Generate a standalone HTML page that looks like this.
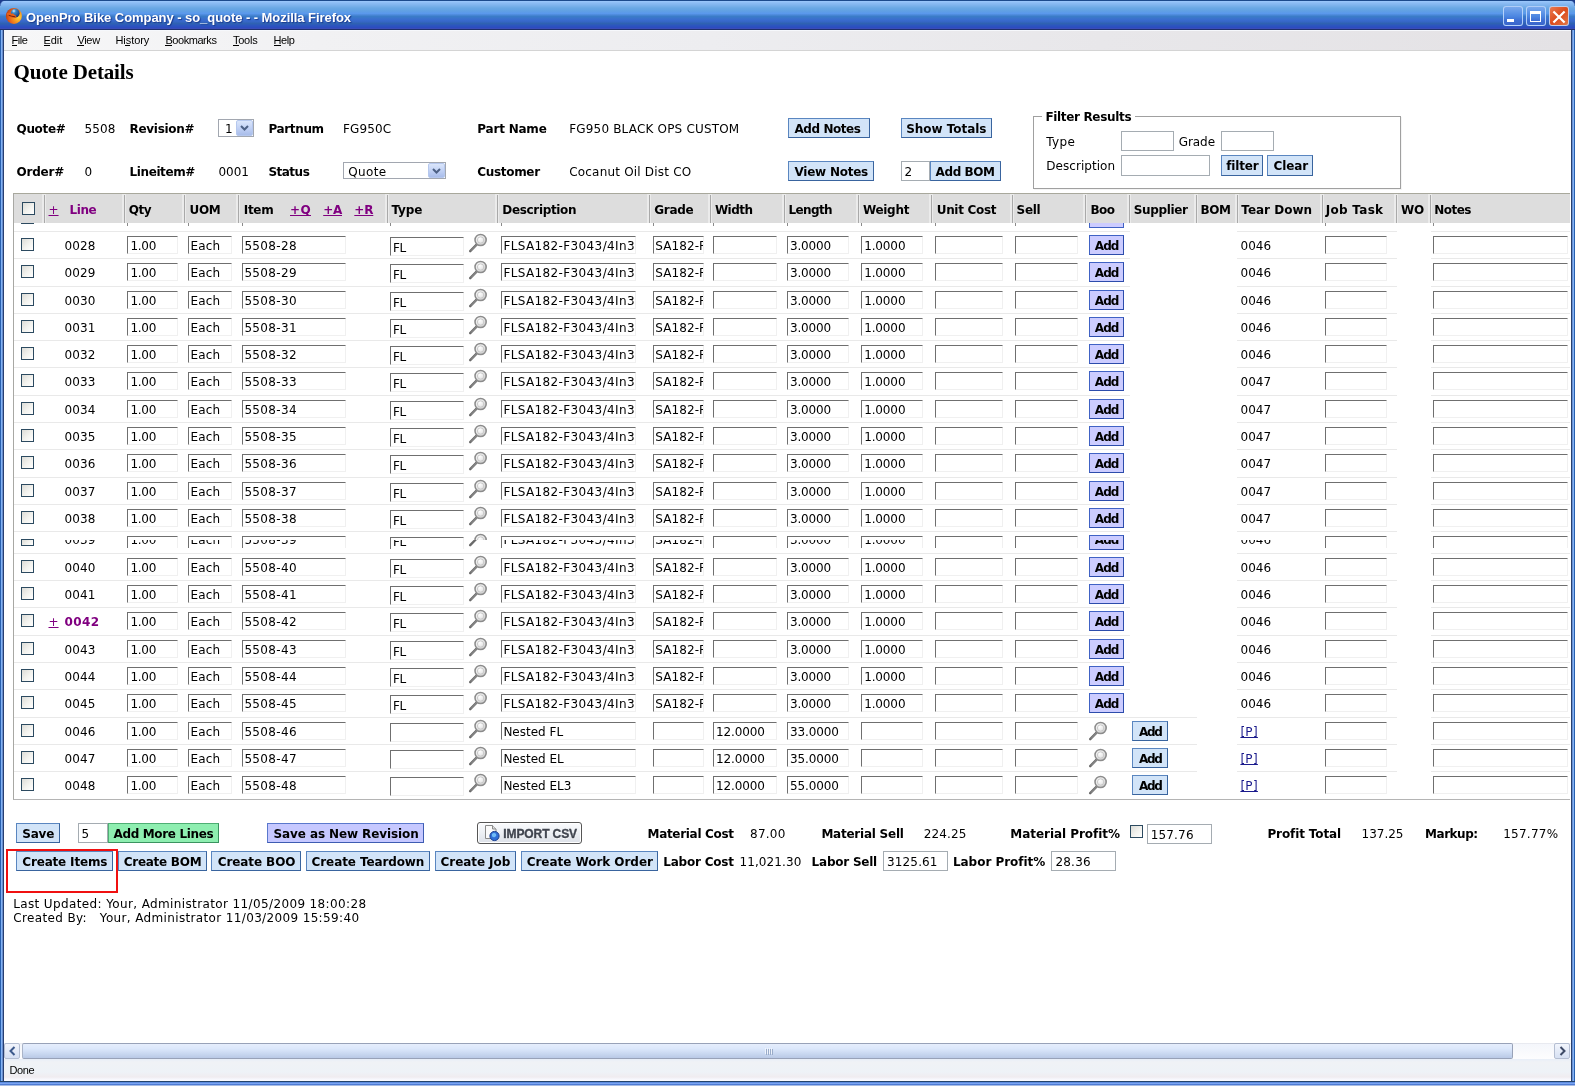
<!DOCTYPE html>
<html><head><meta charset="utf-8"><title>OpenPro Bike Company - so_quote</title>
<style>
html,body{margin:0;padding:0;background:#fff;}
body{width:1575px;height:1086px;position:relative;overflow:hidden;font-family:'DejaVu Sans','Liberation Sans',sans-serif;font-size:12px;color:#000;}
div{position:absolute;}
.t{position:absolute;white-space:pre;display:block;}
</style></head>
<body>
<div id="w" style="left:0;top:0;width:1575px;height:1086px;will-change:transform;overflow:hidden;">
<div style="left:0px;top:0px;width:1575px;height:30px;background:linear-gradient(#1c4a8c 0,#1c4a8c 1px,#9cc8fc 1px,#8cbcf4 3px,#80b4ee 5px,#6aa8e4 8px,#60a0e4 11px,#5a98ec 13.5px,#4a88d8 15px,#3a7cc8 16.5px,#3a70ce 19px,#3868cc 21px,#2f62b2 23.5px,#2c56be 25.5px,#2c4cc0 27.5px,#3a4cb8 28.5px,#20306c 29px,#20306c 30px);"></div>
<div style="left:0px;top:30px;width:4px;height:1056px;z-index:5;background:linear-gradient(90deg,#2860b0 0,#2860b0 1px,#82b2f5 1px,#82b2f5 2px,#6a8ecc 2px,#6a8ecc 3px,#283f72 3px,#283f72 4px);"></div>
<div style="left:1571px;top:30px;width:4px;height:1056px;z-index:5;background:linear-gradient(90deg,#28406e 0,#28406e 1px,#6a90d0 1px,#6a90d0 2px,#82b2f5 2px,#82b2f5 3px,#2860b0 3px,#2860b0 4px);"></div>
<div style="left:0px;top:1081px;width:1575px;height:5px;z-index:6;background:linear-gradient(#24446c 0,#24446c 1px,#5080d8 1px,#7aa4f0 2.5px,#3a68c8 4px,#3a68c8 4px,#a8bce4 4px,#a8bce4 5px);"></div>
<svg style="position:absolute;left:5px;top:7px" width="18" height="18" viewBox="0 0 18 18">
<defs><radialGradient id="fg" cx="80%" cy="60%" r="85%"><stop offset="0" stop-color="#ffd23a"/><stop offset=".35" stop-color="#f79a1e"/><stop offset=".7" stop-color="#e8601a"/><stop offset="1" stop-color="#b43a10"/></radialGradient>
<radialGradient id="gb" cx="35%" cy="25%" r="75%"><stop offset="0" stop-color="#d8f0ff"/><stop offset=".3" stop-color="#3a8ac8"/><stop offset="1" stop-color="#1a3a78"/></radialGradient></defs>
<circle cx="8.9" cy="8.9" r="8" fill="url(#fg)"/>
<circle cx="10.2" cy="6.2" r="4.4" fill="url(#gb)"/>
<path d="M1.6 6.4 C3.2 5.2 5 5.6 6.2 6.8 C7.6 6.2 9 6.8 9.6 8 C10.8 8.4 11.6 9.2 11.2 10.2 C9.4 11.4 6.6 11 4.8 9.8 C3.6 9.4 2.2 8.4 1.6 6.4Z" fill="#e8621a"/>
<path d="M3.6 8.3 C5.6 9 8 9.6 10.4 9.8" stroke="#7a2408" stroke-width="1" fill="none"/>
</svg>
<span class="t" style="left:26px;top:10.00px;font-size:13px;line-height:15px;font-family:'Liberation Sans',sans-serif;font-weight:bold;color:#fff;text-shadow:1px 1px 1px #1a3a8c;letter-spacing:-0.058px;">OpenPro Bike Company - so_quote - - Mozilla Firefox</span>
<div style="left:1503px;top:6px;width:20px;height:20px;border-radius:3px;border:1px solid rgba(190,216,252,.9);box-sizing:border-box;background:linear-gradient(#7aa8ec,#5a92e6 35%,#4a84e0 55%,#3e6ed2 75%,#3a66cc);"><div style="left:3px;top:12px;width:7px;height:3px;background:#fff"></div></div>
<div style="left:1526px;top:6px;width:20px;height:20px;border-radius:3px;border:1px solid rgba(190,216,252,.9);box-sizing:border-box;background:linear-gradient(#7aa8ec,#5a92e6 35%,#4a84e0 55%,#3e6ed2 75%,#3a66cc);"><div style="left:3px;top:4px;width:11px;height:11px;box-sizing:border-box;border:1px solid #fff;border-top-width:3px"></div></div>
<div style="left:1549px;top:6px;width:20px;height:20px;border-radius:3px;border:1px solid rgba(190,216,252,.9);box-sizing:border-box;background:linear-gradient(135deg,#ea7a52,#dc4c1c 50%,#e07848);"><svg style="position:absolute;left:2px;top:3px" width="14" height="14" viewBox="0 0 14 14"><path d="M2.2 2.2 L11.8 11.8 M11.8 2.2 L2.2 11.8" stroke="#fff" stroke-width="2.2" stroke-linecap="square"/></svg></div>
<div style="left:0px;top:0px;width:6px;height:6px;background:radial-gradient(circle at 100% 100%,transparent 5px,#1c3c8c 6.5px);"></div>
<div style="left:1569px;top:0px;width:6px;height:6px;background:radial-gradient(circle at 0 100%,transparent 5px,#1c3c8c 6.5px);"></div>
<div style="left:4px;top:30px;width:1567px;height:21px;background:linear-gradient(90deg,#f7f7f8 0,#f1f1f3 20%,#ededf0 45%,#e8e7ea 70%,#e4e2e5 100%);border-top:1px solid #f6f8fc;border-bottom:1px solid #d4d4d4;box-sizing:border-box;"></div>
<span class="t" style="left:11.6px;top:34.00px;font-size:11px;line-height:12px;font-family:'Liberation Sans',sans-serif;color:#000;letter-spacing:-0.509px;">File</span>
<span class="t" style="left:43.6px;top:34.00px;font-size:11px;line-height:12px;font-family:'Liberation Sans',sans-serif;color:#000;letter-spacing:-0.092px;">Edit</span>
<span class="t" style="left:77.4px;top:34.00px;font-size:11px;line-height:12px;font-family:'Liberation Sans',sans-serif;color:#000;letter-spacing:-0.314px;">View</span>
<span class="t" style="left:115.4px;top:34.00px;font-size:11px;line-height:12px;font-family:'Liberation Sans',sans-serif;color:#000;letter-spacing:-0.048px;">History</span>
<span class="t" style="left:165.4px;top:34.00px;font-size:11px;line-height:12px;font-family:'Liberation Sans',sans-serif;color:#000;letter-spacing:-0.437px;">Bookmarks</span>
<span class="t" style="left:232.9px;top:34.00px;font-size:11px;line-height:12px;font-family:'Liberation Sans',sans-serif;color:#000;letter-spacing:-0.218px;">Tools</span>
<span class="t" style="left:273.5px;top:34.00px;font-size:11px;line-height:12px;font-family:'Liberation Sans',sans-serif;color:#000;letter-spacing:-0.381px;">Help</span>
<div style="left:11.6px;top:45px;width:5.5px;height:1px;background:#000;"></div>
<div style="left:43.6px;top:45px;width:6px;height:1px;background:#000;"></div>
<div style="left:77.4px;top:45px;width:6.5px;height:1px;background:#000;"></div>
<div style="left:125.3px;top:45px;width:4.8px;height:1px;background:#000;"></div>
<div style="left:165.4px;top:45px;width:6.5px;height:1px;background:#000;"></div>
<div style="left:232.9px;top:45px;width:6px;height:1px;background:#000;"></div>
<div style="left:273.5px;top:45px;width:7px;height:1px;background:#000;"></div>
<div style="left:4px;top:1059px;width:1567px;height:22px;background:linear-gradient(#e8eef8 0,#f0f2f6 3px,#eef2f7 13px,#f0ecf0 18px,#f6f6fc 20px,#fcfcff 22px);"></div>
<span class="t" style="left:9.5px;top:1064.00px;font-size:11px;line-height:12px;font-family:'Liberation Sans',sans-serif;letter-spacing:-0.374px;">Done</span>
<div style="left:4px;top:1043px;width:1567px;height:16px;background:linear-gradient(#f4f6fb,#fdfdfe);border-top:1px solid #e8eaf0;box-sizing:border-box;"></div>
<div style="left:4px;top:1043px;width:16px;height:16px;background:linear-gradient(#f2f5fc,#d6e0f3);border:1px solid #b4bed2;box-sizing:border-box;border-radius:2px;"><svg style="position:absolute;left:3px;top:2px" width="9" height="10" viewBox="0 0 9 10"><path d="M6.5 1 L2.5 5 L6.5 9" stroke="#3d5a8c" stroke-width="2" fill="none"/></svg></div>
<div style="left:1554px;top:1043px;width:16px;height:16px;background:linear-gradient(#f2f5fc,#d6e0f3);border:1px solid #b4bed2;box-sizing:border-box;border-radius:2px;"><svg style="position:absolute;left:3px;top:2px" width="9" height="10" viewBox="0 0 9 10"><path d="M2.5 1 L6.5 5 L2.5 9" stroke="#3d4a66" stroke-width="2" fill="none"/></svg></div>
<div style="left:22px;top:1043px;width:1491px;height:16px;background:linear-gradient(#e6eefc 0,#dbe7fb 35%,#c6d5ee 75%,#b9c9e6 100%);border:1px solid #98a2b8;border-left-color:#aab4c8;box-sizing:border-box;border-radius:2px;"><div style="left:742px;top:4px;width:1px;height:6px;background:#eef3fc;box-shadow:2px 0 #eef3fc,4px 0 #eef3fc,6px 0 #eef3fc,1px 1px #9aacc9,3px 1px #9aacc9,5px 1px #9aacc9,7px 1px #9aacc9"></div></div>
<span class="t" style="left:13.5px;top:60.00px;font-size:21px;line-height:24px;font-family:'Liberation Serif',serif;font-weight:bold;letter-spacing:-0.147px;">Quote Details</span>
<span class="t" style="left:16.5px;top:122.00px;font-size:12px;line-height:14px;font-weight:bold;letter-spacing:-0.320px;">Quote#</span>
<span class="t" style="left:84.4px;top:122.00px;font-size:12px;line-height:14px;letter-spacing:0.113px;">5508</span>
<span class="t" style="left:129.5px;top:122.00px;font-size:12px;line-height:14px;font-weight:bold;letter-spacing:-0.291px;">Revision#</span>
<span class="t" style="left:268.4px;top:122.00px;font-size:12px;line-height:14px;font-weight:bold;letter-spacing:-0.347px;">Partnum</span>
<span class="t" style="left:343.1px;top:122.00px;font-size:12px;line-height:14px;letter-spacing:0.119px;">FG950C</span>
<span class="t" style="left:477.3px;top:122.00px;font-size:12px;line-height:14px;font-weight:bold;letter-spacing:-0.210px;">Part Name</span>
<span class="t" style="left:569.2px;top:122.00px;font-size:12px;line-height:14px;letter-spacing:0.182px;">FG950 BLACK OPS CUSTOM</span>
<span class="t" style="left:16.5px;top:165.00px;font-size:12px;line-height:14px;font-weight:bold;letter-spacing:-0.221px;">Order#</span>
<span class="t" style="left:84.4px;top:165.00px;font-size:12px;line-height:14px;">0</span>
<span class="t" style="left:129.5px;top:165.00px;font-size:12px;line-height:14px;font-weight:bold;letter-spacing:-0.389px;">Lineitem#</span>
<span class="t" style="left:218.4px;top:165.00px;font-size:12px;line-height:14px;letter-spacing:-0.012px;">0001</span>
<span class="t" style="left:268.4px;top:165.00px;font-size:12px;line-height:14px;font-weight:bold;letter-spacing:-0.501px;">Status</span>
<span class="t" style="left:477.3px;top:165.00px;font-size:12px;line-height:14px;font-weight:bold;letter-spacing:-0.318px;">Customer</span>
<span class="t" style="left:569.2px;top:165.00px;font-size:12px;line-height:14px;letter-spacing:0.195px;">Cocanut Oil Dist CO</span>
<div style="left:218px;top:119px;width:36px;height:18px;background:#fff;border:1px solid #a2a7b0;box-sizing:border-box;"></div>
<div style="left:236px;top:120px;width:17px;height:16px;background:linear-gradient(#dbe6fb,#c2d2f5 50%,#a9bdea);border:1px solid #b6c8ee;border-radius:2px;box-sizing:border-box;"><svg style="position:absolute;left:3px;top:4px" width="9" height="7" viewBox="0 0 9 7"><path d="M1 1 L4.5 4.5 L8 1" stroke="#4d6185" stroke-width="2" fill="none"/></svg></div>
<span class="t" style="left:225px;top:122.00px;font-size:12px;line-height:14px;">1</span>
<div style="left:343px;top:162px;width:103px;height:17px;background:#fff;border:1px solid #a2a7b0;box-sizing:border-box;"></div>
<div style="left:428px;top:163px;width:17px;height:15px;background:linear-gradient(#dbe6fb,#c2d2f5 50%,#a9bdea);border:1px solid #b6c8ee;border-radius:2px;box-sizing:border-box;"><svg style="position:absolute;left:3px;top:4px" width="9" height="7" viewBox="0 0 9 7"><path d="M1 1 L4.5 4.5 L8 1" stroke="#4d6185" stroke-width="2" fill="none"/></svg></div>
<span class="t" style="left:348.3px;top:165.00px;font-size:12px;line-height:14px;letter-spacing:0.343px;">Quote</span>
<div style="left:788px;top:118px;width:82px;height:20px;background:#d2e4f8;border:1px solid #5a86c0;border-right-color:#39649e;border-bottom-color:#39649e;box-sizing:border-box;"></div>
<span class="t" style="left:794.5px;top:122.00px;font-size:12px;line-height:14px;font-weight:bold;letter-spacing:-0.439px;">Add Notes</span>
<div style="left:901px;top:118px;width:91px;height:20px;background:#d2e4f8;border:1px solid #5a86c0;border-right-color:#39649e;border-bottom-color:#39649e;box-sizing:border-box;"></div>
<span class="t" style="left:906.2px;top:122.00px;font-size:12px;line-height:14px;font-weight:bold;letter-spacing:-0.030px;">Show Totals</span>
<div style="left:788px;top:161px;width:86px;height:20px;background:#d2e4f8;border:1px solid #5a86c0;border-right-color:#39649e;border-bottom-color:#39649e;box-sizing:border-box;"></div>
<span class="t" style="left:794.5px;top:165.00px;font-size:12px;line-height:14px;font-weight:bold;letter-spacing:-0.241px;">View Notes</span>
<div style="left:901px;top:161px;width:29px;height:20px;background:#fff;border:1px solid #a5acb2;box-sizing:border-box;"></div>
<span class="t" style="left:904.6px;top:165.00px;font-size:12px;line-height:14px;">2</span>
<div style="left:930px;top:161px;width:71px;height:20px;background:#d2e4f8;border:1px solid #5a86c0;border-right-color:#39649e;border-bottom-color:#39649e;box-sizing:border-box;"></div>
<span class="t" style="left:935.6px;top:165.00px;font-size:12px;line-height:14px;font-weight:bold;letter-spacing:-0.420px;">Add BOM</span>
<div style="left:1033px;top:115.5px;width:368px;height:73px;border:1px solid #a0a0a0;box-sizing:border-box;box-shadow:inset 1px 1px 0 #fff, 1px 1px 0 #f4f4f4;"></div>
<div style="left:1042px;top:108px;width:93px;height:16px;background:#fff;"></div>
<span class="t" style="left:1045.4px;top:110.00px;font-size:12px;line-height:14px;font-weight:bold;letter-spacing:-0.332px;">Filter Results</span>
<span class="t" style="left:1046.2px;top:135.00px;font-size:12px;line-height:14px;letter-spacing:0.409px;">Type</span>
<span class="t" style="left:1178.7px;top:135.00px;font-size:12px;line-height:14px;letter-spacing:-0.059px;">Grade</span>
<span class="t" style="left:1046.2px;top:159.00px;font-size:12px;line-height:14px;letter-spacing:0.060px;">Description</span>
<div style="left:1121px;top:131px;width:53px;height:20px;background:#fff;border:1px solid #a5acb2;box-sizing:border-box;"></div>
<div style="left:1221px;top:131px;width:53px;height:20px;background:#fff;border:1px solid #a5acb2;box-sizing:border-box;"></div>
<div style="left:1121px;top:155px;width:89px;height:21px;background:#fff;border:1px solid #a5acb2;box-sizing:border-box;"></div>
<div style="left:1221px;top:155px;width:42px;height:21px;background:#d2e4f8;border:1px solid #5a86c0;border-right-color:#39649e;border-bottom-color:#39649e;box-sizing:border-box;"></div>
<span class="t" style="left:1226.2px;top:159.00px;font-size:12px;line-height:14px;font-weight:bold;letter-spacing:-0.169px;">filter</span>
<div style="left:1267px;top:155px;width:46px;height:21px;background:#d2e4f8;border:1px solid #5a86c0;border-right-color:#39649e;border-bottom-color:#39649e;box-sizing:border-box;"></div>
<span class="t" style="left:1273.5px;top:159.00px;font-size:12px;line-height:14px;font-weight:bold;letter-spacing:-0.076px;">Clear</span>
<div style="left:13px;top:193px;width:1557px;height:607px;border:1px solid #a8a89c;border-right:none;border-left-color:#a8a8a4;border-bottom-color:#b4b4b4;box-sizing:border-box;"></div>
<div style="left:14px;top:194px;width:1556px;height:29px;background:#dddddd;"></div>
<div style="left:42px;top:194px;width:4px;height:29px;background:#ebebeb;"></div>
<div style="left:44px;top:195px;width:1px;height:28px;background:#a9a9a9;"></div>
<div style="left:122px;top:194px;width:4px;height:29px;background:#ebebeb;"></div>
<div style="left:124px;top:195px;width:1px;height:28px;background:#a9a9a9;"></div>
<div style="left:182px;top:194px;width:4px;height:29px;background:#ebebeb;"></div>
<div style="left:184px;top:195px;width:1px;height:28px;background:#a9a9a9;"></div>
<div style="left:236px;top:194px;width:4px;height:29px;background:#ebebeb;"></div>
<div style="left:238px;top:195px;width:1px;height:28px;background:#a9a9a9;"></div>
<div style="left:385px;top:194px;width:4px;height:29px;background:#ebebeb;"></div>
<div style="left:387px;top:195px;width:1px;height:28px;background:#a9a9a9;"></div>
<div style="left:495px;top:194px;width:4px;height:29px;background:#ebebeb;"></div>
<div style="left:497px;top:195px;width:1px;height:28px;background:#a9a9a9;"></div>
<div style="left:647px;top:194px;width:4px;height:29px;background:#ebebeb;"></div>
<div style="left:649px;top:195px;width:1px;height:28px;background:#a9a9a9;"></div>
<div style="left:708px;top:194px;width:4px;height:29px;background:#ebebeb;"></div>
<div style="left:710px;top:195px;width:1px;height:28px;background:#a9a9a9;"></div>
<div style="left:782px;top:194px;width:4px;height:29px;background:#ebebeb;"></div>
<div style="left:784px;top:195px;width:1px;height:28px;background:#a9a9a9;"></div>
<div style="left:856px;top:194px;width:4px;height:29px;background:#ebebeb;"></div>
<div style="left:858px;top:195px;width:1px;height:28px;background:#a9a9a9;"></div>
<div style="left:929px;top:194px;width:4px;height:29px;background:#ebebeb;"></div>
<div style="left:931px;top:195px;width:1px;height:28px;background:#a9a9a9;"></div>
<div style="left:1010px;top:194px;width:4px;height:29px;background:#ebebeb;"></div>
<div style="left:1012px;top:195px;width:1px;height:28px;background:#a9a9a9;"></div>
<div style="left:1083px;top:194px;width:4px;height:29px;background:#ebebeb;"></div>
<div style="left:1085px;top:195px;width:1px;height:28px;background:#a9a9a9;"></div>
<div style="left:1127px;top:194px;width:4px;height:29px;background:#ebebeb;"></div>
<div style="left:1129px;top:195px;width:1px;height:28px;background:#a9a9a9;"></div>
<div style="left:1194px;top:194px;width:4px;height:29px;background:#ebebeb;"></div>
<div style="left:1196px;top:195px;width:1px;height:28px;background:#a9a9a9;"></div>
<div style="left:1235px;top:194px;width:4px;height:29px;background:#ebebeb;"></div>
<div style="left:1237px;top:195px;width:1px;height:28px;background:#a9a9a9;"></div>
<div style="left:1320px;top:194px;width:4px;height:29px;background:#ebebeb;"></div>
<div style="left:1322px;top:195px;width:1px;height:28px;background:#a9a9a9;"></div>
<div style="left:1394px;top:194px;width:4px;height:29px;background:#ebebeb;"></div>
<div style="left:1396px;top:195px;width:1px;height:28px;background:#a9a9a9;"></div>
<div style="left:1428px;top:194px;width:4px;height:29px;background:#ebebeb;"></div>
<div style="left:1430px;top:195px;width:1px;height:28px;background:#a9a9a9;"></div>
<span class="t" style="left:48.5px;top:203.00px;font-size:12px;line-height:14px;color:#800080;text-decoration:underline;text-decoration-skip-ink:none;">+</span>
<span class="t" style="left:69.6px;top:203.00px;font-size:12px;line-height:14px;font-weight:bold;color:#800080;letter-spacing:-0.488px;">Line</span>
<span class="t" style="left:128.7px;top:203.00px;font-size:12px;line-height:14px;font-weight:bold;letter-spacing:-0.489px;">Qty</span>
<span class="t" style="left:189.5px;top:203.00px;font-size:12px;line-height:14px;font-weight:bold;letter-spacing:-0.330px;">UOM</span>
<span class="t" style="left:243.8px;top:203.00px;font-size:12px;line-height:14px;font-weight:bold;letter-spacing:-0.336px;">Item</span>
<span class="t" style="left:391.4px;top:203.00px;font-size:12px;line-height:14px;font-weight:bold;letter-spacing:-0.103px;">Type</span>
<span class="t" style="left:502.3px;top:203.00px;font-size:12px;line-height:14px;font-weight:bold;letter-spacing:-0.339px;">Description</span>
<span class="t" style="left:654.3px;top:203.00px;font-size:12px;line-height:14px;font-weight:bold;letter-spacing:-0.319px;">Grade</span>
<span class="t" style="left:714.9px;top:203.00px;font-size:12px;line-height:14px;font-weight:bold;letter-spacing:-0.544px;">Width</span>
<span class="t" style="left:788.6px;top:203.00px;font-size:12px;line-height:14px;font-weight:bold;letter-spacing:-0.634px;">Length</span>
<span class="t" style="left:862.9px;top:203.00px;font-size:12px;line-height:14px;font-weight:bold;letter-spacing:-0.290px;">Weight</span>
<span class="t" style="left:936.7px;top:203.00px;font-size:12px;line-height:14px;font-weight:bold;letter-spacing:-0.306px;">Unit Cost</span>
<span class="t" style="left:1016.6px;top:203.00px;font-size:12px;line-height:14px;font-weight:bold;letter-spacing:-0.304px;">Sell</span>
<span class="t" style="left:1090.5px;top:203.00px;font-size:12px;line-height:14px;font-weight:bold;letter-spacing:-0.614px;">Boo</span>
<span class="t" style="left:1133.7px;top:203.00px;font-size:12px;line-height:14px;font-weight:bold;letter-spacing:-0.345px;">Supplier</span>
<span class="t" style="left:1200.4px;top:203.00px;font-size:12px;line-height:14px;font-weight:bold;letter-spacing:-0.399px;">BOM</span>
<span class="t" style="left:1241.3px;top:203.00px;font-size:12px;line-height:14px;font-weight:bold;letter-spacing:-0.007px;">Tear Down</span>
<span class="t" style="left:1325.7px;top:203.00px;font-size:12px;line-height:14px;font-weight:bold;letter-spacing:0.295px;">Job Task</span>
<span class="t" style="left:1401px;top:203.00px;font-size:12px;line-height:14px;font-weight:bold;letter-spacing:-0.119px;">WO</span>
<span class="t" style="left:1434.3px;top:203.00px;font-size:12px;line-height:14px;font-weight:bold;letter-spacing:-0.522px;">Notes</span>
<span class="t" style="left:290px;top:203.00px;font-size:12px;line-height:14px;font-weight:bold;color:#800080;text-decoration:underline;text-decoration-skip-ink:none;letter-spacing:0.367px;">+Q</span>
<span class="t" style="left:323.2px;top:203.00px;font-size:12px;line-height:14px;font-weight:bold;color:#800080;text-decoration:underline;text-decoration-skip-ink:none;letter-spacing:-0.272px;">+A</span>
<span class="t" style="left:354.3px;top:203.00px;font-size:12px;line-height:14px;font-weight:bold;color:#800080;text-decoration:underline;text-decoration-skip-ink:none;letter-spacing:-0.148px;">+R</span>
<div style="left:22px;top:202px;width:13px;height:13px;background:linear-gradient(135deg,#dcdcd7,#f3f3ef 55%,#ffffff);border:1px solid #2c4a60;box-sizing:border-box;"></div>
<div style="left:14px;top:231px;width:1116px;height:1px;background:#e9e9e9;"></div>
<div style="left:1237px;top:231px;width:160px;height:1px;background:#e9e9e9;"></div>
<div style="left:1431px;top:231px;width:139px;height:1px;background:#e9e9e9;"></div>
<div style="left:21px;top:238px;width:13px;height:13px;background:linear-gradient(135deg,#dcdcd7,#f3f3ef 55%,#ffffff);border:1px solid #2c4a60;box-sizing:border-box;"></div>
<span class="t" style="left:64.5px;top:239.00px;font-size:12px;line-height:14px;letter-spacing:0.088px;">0028</span>
<div style="left:127px;top:236px;width:51px;height:18px;background:#fff;border:1px solid #f0f0f0;border-top-color:#6f6f6f;border-left-color:#6f6f6f;box-sizing:border-box;overflow:hidden;"></div>
<div style="left:188px;top:236px;width:44px;height:18px;background:#fff;border:1px solid #f0f0f0;border-top-color:#6f6f6f;border-left-color:#6f6f6f;box-sizing:border-box;overflow:hidden;"></div>
<div style="left:242px;top:236px;width:104px;height:18px;background:#fff;border:1px solid #f0f0f0;border-top-color:#6f6f6f;border-left-color:#6f6f6f;box-sizing:border-box;overflow:hidden;"></div>
<div style="left:501px;top:236px;width:135px;height:18px;background:#fff;border:1px solid #f0f0f0;border-top-color:#6f6f6f;border-left-color:#6f6f6f;box-sizing:border-box;overflow:hidden;"></div>
<div style="left:653px;top:236px;width:51px;height:18px;background:#fff;border:1px solid #f0f0f0;border-top-color:#6f6f6f;border-left-color:#6f6f6f;box-sizing:border-box;overflow:hidden;"></div>
<div style="left:713px;top:236px;width:64px;height:18px;background:#fff;border:1px solid #f0f0f0;border-top-color:#6f6f6f;border-left-color:#6f6f6f;box-sizing:border-box;overflow:hidden;"></div>
<div style="left:787px;top:236px;width:62px;height:18px;background:#fff;border:1px solid #f0f0f0;border-top-color:#6f6f6f;border-left-color:#6f6f6f;box-sizing:border-box;overflow:hidden;"></div>
<div style="left:861px;top:236px;width:62px;height:18px;background:#fff;border:1px solid #f0f0f0;border-top-color:#6f6f6f;border-left-color:#6f6f6f;box-sizing:border-box;overflow:hidden;"></div>
<div style="left:935px;top:236px;width:68px;height:18px;background:#fff;border:1px solid #f0f0f0;border-top-color:#6f6f6f;border-left-color:#6f6f6f;box-sizing:border-box;overflow:hidden;"></div>
<div style="left:1015px;top:236px;width:63px;height:18px;background:#fff;border:1px solid #f0f0f0;border-top-color:#6f6f6f;border-left-color:#6f6f6f;box-sizing:border-box;overflow:hidden;"></div>
<div style="left:1325px;top:236px;width:62px;height:18px;background:#fff;border:1px solid #f0f0f0;border-top-color:#6f6f6f;border-left-color:#6f6f6f;box-sizing:border-box;overflow:hidden;"></div>
<div style="left:1433px;top:236px;width:135px;height:18px;background:#fff;border:1px solid #f0f0f0;border-top-color:#6f6f6f;border-left-color:#6f6f6f;box-sizing:border-box;overflow:hidden;"></div>
<div style="left:390px;top:237px;width:74px;height:19px;background:#fff;border:1px solid #f0f0f0;border-top-color:#6f6f6f;border-left-color:#6f6f6f;box-sizing:border-box;overflow:hidden;"></div>
<span class="t" style="left:130.4px;top:239.00px;font-size:12px;line-height:14px;letter-spacing:-0.255px;">1.00</span>
<span class="t" style="left:190.6px;top:239.00px;font-size:12px;line-height:14px;letter-spacing:0.115px;">Each</span>
<span class="t" style="left:244.4px;top:239.00px;font-size:12px;line-height:14px;letter-spacing:0.337px;">5508-28</span>
<svg style="position:absolute;left:468px;top:233px" width="20" height="20" viewBox="0 0 20 20"><defs><radialGradient id="lg1" cx="40%" cy="35%" r="70%"><stop offset="0" stop-color="#fff"/><stop offset=".6" stop-color="#e6e6e6"/><stop offset="1" stop-color="#bdbdbd"/></radialGradient></defs><path d="M8.6 11.6 L2.2 18.2" stroke="#6a6a6a" stroke-width="2.4" stroke-linecap="round"/><path d="M9.2 11.2 L3 17.6" stroke="#9a9a9a" stroke-width="1"/><circle cx="12.6" cy="7" r="5.6" fill="url(#lg1)" stroke="#8c8c8c" stroke-width="1.5"/><circle cx="12.6" cy="7" r="3.2" fill="none" stroke="#c9c9c9" stroke-width="1"/></svg>
<span class="t" style="left:393px;top:241.00px;font-size:12px;line-height:14px;letter-spacing:-0.297px;">FL</span>
<span class="t" style="left:503.4px;top:239.00px;font-size:12px;line-height:14px;width:131.5px;overflow:hidden;letter-spacing:0.379px;">FLSA182-F3043/4In3</span>
<span class="t" style="left:655.2px;top:239.00px;font-size:12px;line-height:14px;width:47.6px;overflow:hidden;letter-spacing:0.1px;">SA182-F</span>
<span class="t" style="left:789.9px;top:239.00px;font-size:12px;line-height:14px;letter-spacing:-0.133px;">3.0000</span>
<span class="t" style="left:864.2px;top:239.00px;font-size:12px;line-height:14px;letter-spacing:-0.133px;">1.0000</span>
<div style="left:1089px;top:235px;width:35px;height:20px;background:#ccccff;border:1px solid #4062c4;border-right-color:#2c4cac;border-bottom-color:#2c4cac;box-sizing:border-box;"></div>
<span class="t" style="left:1094.8px;top:239.00px;font-size:12px;line-height:14px;font-weight:bold;letter-spacing:-0.956px;">Add</span>
<span class="t" style="left:1240.6px;top:239.00px;font-size:12px;line-height:14px;letter-spacing:-0.012px;">0046</span>
<div style="left:14px;top:258px;width:1116px;height:1px;background:#e9e9e9;"></div>
<div style="left:1237px;top:258px;width:160px;height:1px;background:#e9e9e9;"></div>
<div style="left:1431px;top:258px;width:139px;height:1px;background:#e9e9e9;"></div>
<div style="left:21px;top:265px;width:13px;height:13px;background:linear-gradient(135deg,#dcdcd7,#f3f3ef 55%,#ffffff);border:1px solid #2c4a60;box-sizing:border-box;"></div>
<span class="t" style="left:64.5px;top:266.00px;font-size:12px;line-height:14px;letter-spacing:0.088px;">0029</span>
<div style="left:127px;top:263px;width:51px;height:18px;background:#fff;border:1px solid #f0f0f0;border-top-color:#6f6f6f;border-left-color:#6f6f6f;box-sizing:border-box;overflow:hidden;"></div>
<div style="left:188px;top:263px;width:44px;height:18px;background:#fff;border:1px solid #f0f0f0;border-top-color:#6f6f6f;border-left-color:#6f6f6f;box-sizing:border-box;overflow:hidden;"></div>
<div style="left:242px;top:263px;width:104px;height:18px;background:#fff;border:1px solid #f0f0f0;border-top-color:#6f6f6f;border-left-color:#6f6f6f;box-sizing:border-box;overflow:hidden;"></div>
<div style="left:501px;top:263px;width:135px;height:18px;background:#fff;border:1px solid #f0f0f0;border-top-color:#6f6f6f;border-left-color:#6f6f6f;box-sizing:border-box;overflow:hidden;"></div>
<div style="left:653px;top:263px;width:51px;height:18px;background:#fff;border:1px solid #f0f0f0;border-top-color:#6f6f6f;border-left-color:#6f6f6f;box-sizing:border-box;overflow:hidden;"></div>
<div style="left:713px;top:263px;width:64px;height:18px;background:#fff;border:1px solid #f0f0f0;border-top-color:#6f6f6f;border-left-color:#6f6f6f;box-sizing:border-box;overflow:hidden;"></div>
<div style="left:787px;top:263px;width:62px;height:18px;background:#fff;border:1px solid #f0f0f0;border-top-color:#6f6f6f;border-left-color:#6f6f6f;box-sizing:border-box;overflow:hidden;"></div>
<div style="left:861px;top:263px;width:62px;height:18px;background:#fff;border:1px solid #f0f0f0;border-top-color:#6f6f6f;border-left-color:#6f6f6f;box-sizing:border-box;overflow:hidden;"></div>
<div style="left:935px;top:263px;width:68px;height:18px;background:#fff;border:1px solid #f0f0f0;border-top-color:#6f6f6f;border-left-color:#6f6f6f;box-sizing:border-box;overflow:hidden;"></div>
<div style="left:1015px;top:263px;width:63px;height:18px;background:#fff;border:1px solid #f0f0f0;border-top-color:#6f6f6f;border-left-color:#6f6f6f;box-sizing:border-box;overflow:hidden;"></div>
<div style="left:1325px;top:263px;width:62px;height:18px;background:#fff;border:1px solid #f0f0f0;border-top-color:#6f6f6f;border-left-color:#6f6f6f;box-sizing:border-box;overflow:hidden;"></div>
<div style="left:1433px;top:263px;width:135px;height:18px;background:#fff;border:1px solid #f0f0f0;border-top-color:#6f6f6f;border-left-color:#6f6f6f;box-sizing:border-box;overflow:hidden;"></div>
<div style="left:390px;top:264px;width:74px;height:19px;background:#fff;border:1px solid #f0f0f0;border-top-color:#6f6f6f;border-left-color:#6f6f6f;box-sizing:border-box;overflow:hidden;"></div>
<span class="t" style="left:130.4px;top:266.00px;font-size:12px;line-height:14px;letter-spacing:-0.255px;">1.00</span>
<span class="t" style="left:190.6px;top:266.00px;font-size:12px;line-height:14px;letter-spacing:0.115px;">Each</span>
<span class="t" style="left:244.4px;top:266.00px;font-size:12px;line-height:14px;letter-spacing:0.337px;">5508-29</span>
<svg style="position:absolute;left:468px;top:260px" width="20" height="20" viewBox="0 0 20 20"><defs><radialGradient id="lg2" cx="40%" cy="35%" r="70%"><stop offset="0" stop-color="#fff"/><stop offset=".6" stop-color="#e6e6e6"/><stop offset="1" stop-color="#bdbdbd"/></radialGradient></defs><path d="M8.6 11.6 L2.2 18.2" stroke="#6a6a6a" stroke-width="2.4" stroke-linecap="round"/><path d="M9.2 11.2 L3 17.6" stroke="#9a9a9a" stroke-width="1"/><circle cx="12.6" cy="7" r="5.6" fill="url(#lg2)" stroke="#8c8c8c" stroke-width="1.5"/><circle cx="12.6" cy="7" r="3.2" fill="none" stroke="#c9c9c9" stroke-width="1"/></svg>
<span class="t" style="left:393px;top:268.00px;font-size:12px;line-height:14px;letter-spacing:-0.297px;">FL</span>
<span class="t" style="left:503.4px;top:266.00px;font-size:12px;line-height:14px;width:131.5px;overflow:hidden;letter-spacing:0.379px;">FLSA182-F3043/4In3</span>
<span class="t" style="left:655.2px;top:266.00px;font-size:12px;line-height:14px;width:47.6px;overflow:hidden;letter-spacing:0.1px;">SA182-F</span>
<span class="t" style="left:789.9px;top:266.00px;font-size:12px;line-height:14px;letter-spacing:-0.133px;">3.0000</span>
<span class="t" style="left:864.2px;top:266.00px;font-size:12px;line-height:14px;letter-spacing:-0.133px;">1.0000</span>
<div style="left:1089px;top:262px;width:35px;height:20px;background:#ccccff;border:1px solid #4062c4;border-right-color:#2c4cac;border-bottom-color:#2c4cac;box-sizing:border-box;"></div>
<span class="t" style="left:1094.8px;top:266.00px;font-size:12px;line-height:14px;font-weight:bold;letter-spacing:-0.956px;">Add</span>
<span class="t" style="left:1240.6px;top:266.00px;font-size:12px;line-height:14px;letter-spacing:-0.012px;">0046</span>
<div style="left:14px;top:286px;width:1116px;height:1px;background:#e9e9e9;"></div>
<div style="left:1237px;top:286px;width:160px;height:1px;background:#e9e9e9;"></div>
<div style="left:1431px;top:286px;width:139px;height:1px;background:#e9e9e9;"></div>
<div style="left:21px;top:293px;width:13px;height:13px;background:linear-gradient(135deg,#dcdcd7,#f3f3ef 55%,#ffffff);border:1px solid #2c4a60;box-sizing:border-box;"></div>
<span class="t" style="left:64.5px;top:294.00px;font-size:12px;line-height:14px;letter-spacing:0.088px;">0030</span>
<div style="left:127px;top:291px;width:51px;height:18px;background:#fff;border:1px solid #f0f0f0;border-top-color:#6f6f6f;border-left-color:#6f6f6f;box-sizing:border-box;overflow:hidden;"></div>
<div style="left:188px;top:291px;width:44px;height:18px;background:#fff;border:1px solid #f0f0f0;border-top-color:#6f6f6f;border-left-color:#6f6f6f;box-sizing:border-box;overflow:hidden;"></div>
<div style="left:242px;top:291px;width:104px;height:18px;background:#fff;border:1px solid #f0f0f0;border-top-color:#6f6f6f;border-left-color:#6f6f6f;box-sizing:border-box;overflow:hidden;"></div>
<div style="left:501px;top:291px;width:135px;height:18px;background:#fff;border:1px solid #f0f0f0;border-top-color:#6f6f6f;border-left-color:#6f6f6f;box-sizing:border-box;overflow:hidden;"></div>
<div style="left:653px;top:291px;width:51px;height:18px;background:#fff;border:1px solid #f0f0f0;border-top-color:#6f6f6f;border-left-color:#6f6f6f;box-sizing:border-box;overflow:hidden;"></div>
<div style="left:713px;top:291px;width:64px;height:18px;background:#fff;border:1px solid #f0f0f0;border-top-color:#6f6f6f;border-left-color:#6f6f6f;box-sizing:border-box;overflow:hidden;"></div>
<div style="left:787px;top:291px;width:62px;height:18px;background:#fff;border:1px solid #f0f0f0;border-top-color:#6f6f6f;border-left-color:#6f6f6f;box-sizing:border-box;overflow:hidden;"></div>
<div style="left:861px;top:291px;width:62px;height:18px;background:#fff;border:1px solid #f0f0f0;border-top-color:#6f6f6f;border-left-color:#6f6f6f;box-sizing:border-box;overflow:hidden;"></div>
<div style="left:935px;top:291px;width:68px;height:18px;background:#fff;border:1px solid #f0f0f0;border-top-color:#6f6f6f;border-left-color:#6f6f6f;box-sizing:border-box;overflow:hidden;"></div>
<div style="left:1015px;top:291px;width:63px;height:18px;background:#fff;border:1px solid #f0f0f0;border-top-color:#6f6f6f;border-left-color:#6f6f6f;box-sizing:border-box;overflow:hidden;"></div>
<div style="left:1325px;top:291px;width:62px;height:18px;background:#fff;border:1px solid #f0f0f0;border-top-color:#6f6f6f;border-left-color:#6f6f6f;box-sizing:border-box;overflow:hidden;"></div>
<div style="left:1433px;top:291px;width:135px;height:18px;background:#fff;border:1px solid #f0f0f0;border-top-color:#6f6f6f;border-left-color:#6f6f6f;box-sizing:border-box;overflow:hidden;"></div>
<div style="left:390px;top:292px;width:74px;height:19px;background:#fff;border:1px solid #f0f0f0;border-top-color:#6f6f6f;border-left-color:#6f6f6f;box-sizing:border-box;overflow:hidden;"></div>
<span class="t" style="left:130.4px;top:294.00px;font-size:12px;line-height:14px;letter-spacing:-0.255px;">1.00</span>
<span class="t" style="left:190.6px;top:294.00px;font-size:12px;line-height:14px;letter-spacing:0.115px;">Each</span>
<span class="t" style="left:244.4px;top:294.00px;font-size:12px;line-height:14px;letter-spacing:0.337px;">5508-30</span>
<svg style="position:absolute;left:468px;top:288px" width="20" height="20" viewBox="0 0 20 20"><defs><radialGradient id="lg3" cx="40%" cy="35%" r="70%"><stop offset="0" stop-color="#fff"/><stop offset=".6" stop-color="#e6e6e6"/><stop offset="1" stop-color="#bdbdbd"/></radialGradient></defs><path d="M8.6 11.6 L2.2 18.2" stroke="#6a6a6a" stroke-width="2.4" stroke-linecap="round"/><path d="M9.2 11.2 L3 17.6" stroke="#9a9a9a" stroke-width="1"/><circle cx="12.6" cy="7" r="5.6" fill="url(#lg3)" stroke="#8c8c8c" stroke-width="1.5"/><circle cx="12.6" cy="7" r="3.2" fill="none" stroke="#c9c9c9" stroke-width="1"/></svg>
<span class="t" style="left:393px;top:296.00px;font-size:12px;line-height:14px;letter-spacing:-0.297px;">FL</span>
<span class="t" style="left:503.4px;top:294.00px;font-size:12px;line-height:14px;width:131.5px;overflow:hidden;letter-spacing:0.379px;">FLSA182-F3043/4In3</span>
<span class="t" style="left:655.2px;top:294.00px;font-size:12px;line-height:14px;width:47.6px;overflow:hidden;letter-spacing:0.1px;">SA182-F</span>
<span class="t" style="left:789.9px;top:294.00px;font-size:12px;line-height:14px;letter-spacing:-0.133px;">3.0000</span>
<span class="t" style="left:864.2px;top:294.00px;font-size:12px;line-height:14px;letter-spacing:-0.133px;">1.0000</span>
<div style="left:1089px;top:290px;width:35px;height:20px;background:#ccccff;border:1px solid #4062c4;border-right-color:#2c4cac;border-bottom-color:#2c4cac;box-sizing:border-box;"></div>
<span class="t" style="left:1094.8px;top:294.00px;font-size:12px;line-height:14px;font-weight:bold;letter-spacing:-0.956px;">Add</span>
<span class="t" style="left:1240.6px;top:294.00px;font-size:12px;line-height:14px;letter-spacing:-0.012px;">0046</span>
<div style="left:14px;top:313px;width:1116px;height:1px;background:#e9e9e9;"></div>
<div style="left:1237px;top:313px;width:160px;height:1px;background:#e9e9e9;"></div>
<div style="left:1431px;top:313px;width:139px;height:1px;background:#e9e9e9;"></div>
<div style="left:21px;top:320px;width:13px;height:13px;background:linear-gradient(135deg,#dcdcd7,#f3f3ef 55%,#ffffff);border:1px solid #2c4a60;box-sizing:border-box;"></div>
<span class="t" style="left:64.5px;top:321.00px;font-size:12px;line-height:14px;letter-spacing:0.088px;">0031</span>
<div style="left:127px;top:318px;width:51px;height:18px;background:#fff;border:1px solid #f0f0f0;border-top-color:#6f6f6f;border-left-color:#6f6f6f;box-sizing:border-box;overflow:hidden;"></div>
<div style="left:188px;top:318px;width:44px;height:18px;background:#fff;border:1px solid #f0f0f0;border-top-color:#6f6f6f;border-left-color:#6f6f6f;box-sizing:border-box;overflow:hidden;"></div>
<div style="left:242px;top:318px;width:104px;height:18px;background:#fff;border:1px solid #f0f0f0;border-top-color:#6f6f6f;border-left-color:#6f6f6f;box-sizing:border-box;overflow:hidden;"></div>
<div style="left:501px;top:318px;width:135px;height:18px;background:#fff;border:1px solid #f0f0f0;border-top-color:#6f6f6f;border-left-color:#6f6f6f;box-sizing:border-box;overflow:hidden;"></div>
<div style="left:653px;top:318px;width:51px;height:18px;background:#fff;border:1px solid #f0f0f0;border-top-color:#6f6f6f;border-left-color:#6f6f6f;box-sizing:border-box;overflow:hidden;"></div>
<div style="left:713px;top:318px;width:64px;height:18px;background:#fff;border:1px solid #f0f0f0;border-top-color:#6f6f6f;border-left-color:#6f6f6f;box-sizing:border-box;overflow:hidden;"></div>
<div style="left:787px;top:318px;width:62px;height:18px;background:#fff;border:1px solid #f0f0f0;border-top-color:#6f6f6f;border-left-color:#6f6f6f;box-sizing:border-box;overflow:hidden;"></div>
<div style="left:861px;top:318px;width:62px;height:18px;background:#fff;border:1px solid #f0f0f0;border-top-color:#6f6f6f;border-left-color:#6f6f6f;box-sizing:border-box;overflow:hidden;"></div>
<div style="left:935px;top:318px;width:68px;height:18px;background:#fff;border:1px solid #f0f0f0;border-top-color:#6f6f6f;border-left-color:#6f6f6f;box-sizing:border-box;overflow:hidden;"></div>
<div style="left:1015px;top:318px;width:63px;height:18px;background:#fff;border:1px solid #f0f0f0;border-top-color:#6f6f6f;border-left-color:#6f6f6f;box-sizing:border-box;overflow:hidden;"></div>
<div style="left:1325px;top:318px;width:62px;height:18px;background:#fff;border:1px solid #f0f0f0;border-top-color:#6f6f6f;border-left-color:#6f6f6f;box-sizing:border-box;overflow:hidden;"></div>
<div style="left:1433px;top:318px;width:135px;height:18px;background:#fff;border:1px solid #f0f0f0;border-top-color:#6f6f6f;border-left-color:#6f6f6f;box-sizing:border-box;overflow:hidden;"></div>
<div style="left:390px;top:319px;width:74px;height:19px;background:#fff;border:1px solid #f0f0f0;border-top-color:#6f6f6f;border-left-color:#6f6f6f;box-sizing:border-box;overflow:hidden;"></div>
<span class="t" style="left:130.4px;top:321.00px;font-size:12px;line-height:14px;letter-spacing:-0.255px;">1.00</span>
<span class="t" style="left:190.6px;top:321.00px;font-size:12px;line-height:14px;letter-spacing:0.115px;">Each</span>
<span class="t" style="left:244.4px;top:321.00px;font-size:12px;line-height:14px;letter-spacing:0.337px;">5508-31</span>
<svg style="position:absolute;left:468px;top:315px" width="20" height="20" viewBox="0 0 20 20"><defs><radialGradient id="lg4" cx="40%" cy="35%" r="70%"><stop offset="0" stop-color="#fff"/><stop offset=".6" stop-color="#e6e6e6"/><stop offset="1" stop-color="#bdbdbd"/></radialGradient></defs><path d="M8.6 11.6 L2.2 18.2" stroke="#6a6a6a" stroke-width="2.4" stroke-linecap="round"/><path d="M9.2 11.2 L3 17.6" stroke="#9a9a9a" stroke-width="1"/><circle cx="12.6" cy="7" r="5.6" fill="url(#lg4)" stroke="#8c8c8c" stroke-width="1.5"/><circle cx="12.6" cy="7" r="3.2" fill="none" stroke="#c9c9c9" stroke-width="1"/></svg>
<span class="t" style="left:393px;top:323.00px;font-size:12px;line-height:14px;letter-spacing:-0.297px;">FL</span>
<span class="t" style="left:503.4px;top:321.00px;font-size:12px;line-height:14px;width:131.5px;overflow:hidden;letter-spacing:0.379px;">FLSA182-F3043/4In3</span>
<span class="t" style="left:655.2px;top:321.00px;font-size:12px;line-height:14px;width:47.6px;overflow:hidden;letter-spacing:0.1px;">SA182-F</span>
<span class="t" style="left:789.9px;top:321.00px;font-size:12px;line-height:14px;letter-spacing:-0.133px;">3.0000</span>
<span class="t" style="left:864.2px;top:321.00px;font-size:12px;line-height:14px;letter-spacing:-0.133px;">1.0000</span>
<div style="left:1089px;top:317px;width:35px;height:20px;background:#ccccff;border:1px solid #4062c4;border-right-color:#2c4cac;border-bottom-color:#2c4cac;box-sizing:border-box;"></div>
<span class="t" style="left:1094.8px;top:321.00px;font-size:12px;line-height:14px;font-weight:bold;letter-spacing:-0.956px;">Add</span>
<span class="t" style="left:1240.6px;top:321.00px;font-size:12px;line-height:14px;letter-spacing:-0.012px;">0046</span>
<div style="left:14px;top:340px;width:1116px;height:1px;background:#e9e9e9;"></div>
<div style="left:1237px;top:340px;width:160px;height:1px;background:#e9e9e9;"></div>
<div style="left:1431px;top:340px;width:139px;height:1px;background:#e9e9e9;"></div>
<div style="left:21px;top:347px;width:13px;height:13px;background:linear-gradient(135deg,#dcdcd7,#f3f3ef 55%,#ffffff);border:1px solid #2c4a60;box-sizing:border-box;"></div>
<span class="t" style="left:64.5px;top:348.00px;font-size:12px;line-height:14px;letter-spacing:0.088px;">0032</span>
<div style="left:127px;top:345px;width:51px;height:18px;background:#fff;border:1px solid #f0f0f0;border-top-color:#6f6f6f;border-left-color:#6f6f6f;box-sizing:border-box;overflow:hidden;"></div>
<div style="left:188px;top:345px;width:44px;height:18px;background:#fff;border:1px solid #f0f0f0;border-top-color:#6f6f6f;border-left-color:#6f6f6f;box-sizing:border-box;overflow:hidden;"></div>
<div style="left:242px;top:345px;width:104px;height:18px;background:#fff;border:1px solid #f0f0f0;border-top-color:#6f6f6f;border-left-color:#6f6f6f;box-sizing:border-box;overflow:hidden;"></div>
<div style="left:501px;top:345px;width:135px;height:18px;background:#fff;border:1px solid #f0f0f0;border-top-color:#6f6f6f;border-left-color:#6f6f6f;box-sizing:border-box;overflow:hidden;"></div>
<div style="left:653px;top:345px;width:51px;height:18px;background:#fff;border:1px solid #f0f0f0;border-top-color:#6f6f6f;border-left-color:#6f6f6f;box-sizing:border-box;overflow:hidden;"></div>
<div style="left:713px;top:345px;width:64px;height:18px;background:#fff;border:1px solid #f0f0f0;border-top-color:#6f6f6f;border-left-color:#6f6f6f;box-sizing:border-box;overflow:hidden;"></div>
<div style="left:787px;top:345px;width:62px;height:18px;background:#fff;border:1px solid #f0f0f0;border-top-color:#6f6f6f;border-left-color:#6f6f6f;box-sizing:border-box;overflow:hidden;"></div>
<div style="left:861px;top:345px;width:62px;height:18px;background:#fff;border:1px solid #f0f0f0;border-top-color:#6f6f6f;border-left-color:#6f6f6f;box-sizing:border-box;overflow:hidden;"></div>
<div style="left:935px;top:345px;width:68px;height:18px;background:#fff;border:1px solid #f0f0f0;border-top-color:#6f6f6f;border-left-color:#6f6f6f;box-sizing:border-box;overflow:hidden;"></div>
<div style="left:1015px;top:345px;width:63px;height:18px;background:#fff;border:1px solid #f0f0f0;border-top-color:#6f6f6f;border-left-color:#6f6f6f;box-sizing:border-box;overflow:hidden;"></div>
<div style="left:1325px;top:345px;width:62px;height:18px;background:#fff;border:1px solid #f0f0f0;border-top-color:#6f6f6f;border-left-color:#6f6f6f;box-sizing:border-box;overflow:hidden;"></div>
<div style="left:1433px;top:345px;width:135px;height:18px;background:#fff;border:1px solid #f0f0f0;border-top-color:#6f6f6f;border-left-color:#6f6f6f;box-sizing:border-box;overflow:hidden;"></div>
<div style="left:390px;top:346px;width:74px;height:19px;background:#fff;border:1px solid #f0f0f0;border-top-color:#6f6f6f;border-left-color:#6f6f6f;box-sizing:border-box;overflow:hidden;"></div>
<span class="t" style="left:130.4px;top:348.00px;font-size:12px;line-height:14px;letter-spacing:-0.255px;">1.00</span>
<span class="t" style="left:190.6px;top:348.00px;font-size:12px;line-height:14px;letter-spacing:0.115px;">Each</span>
<span class="t" style="left:244.4px;top:348.00px;font-size:12px;line-height:14px;letter-spacing:0.337px;">5508-32</span>
<svg style="position:absolute;left:468px;top:342px" width="20" height="20" viewBox="0 0 20 20"><defs><radialGradient id="lg5" cx="40%" cy="35%" r="70%"><stop offset="0" stop-color="#fff"/><stop offset=".6" stop-color="#e6e6e6"/><stop offset="1" stop-color="#bdbdbd"/></radialGradient></defs><path d="M8.6 11.6 L2.2 18.2" stroke="#6a6a6a" stroke-width="2.4" stroke-linecap="round"/><path d="M9.2 11.2 L3 17.6" stroke="#9a9a9a" stroke-width="1"/><circle cx="12.6" cy="7" r="5.6" fill="url(#lg5)" stroke="#8c8c8c" stroke-width="1.5"/><circle cx="12.6" cy="7" r="3.2" fill="none" stroke="#c9c9c9" stroke-width="1"/></svg>
<span class="t" style="left:393px;top:350.00px;font-size:12px;line-height:14px;letter-spacing:-0.297px;">FL</span>
<span class="t" style="left:503.4px;top:348.00px;font-size:12px;line-height:14px;width:131.5px;overflow:hidden;letter-spacing:0.379px;">FLSA182-F3043/4In3</span>
<span class="t" style="left:655.2px;top:348.00px;font-size:12px;line-height:14px;width:47.6px;overflow:hidden;letter-spacing:0.1px;">SA182-F</span>
<span class="t" style="left:789.9px;top:348.00px;font-size:12px;line-height:14px;letter-spacing:-0.133px;">3.0000</span>
<span class="t" style="left:864.2px;top:348.00px;font-size:12px;line-height:14px;letter-spacing:-0.133px;">1.0000</span>
<div style="left:1089px;top:344px;width:35px;height:20px;background:#ccccff;border:1px solid #4062c4;border-right-color:#2c4cac;border-bottom-color:#2c4cac;box-sizing:border-box;"></div>
<span class="t" style="left:1094.8px;top:348.00px;font-size:12px;line-height:14px;font-weight:bold;letter-spacing:-0.956px;">Add</span>
<span class="t" style="left:1240.6px;top:348.00px;font-size:12px;line-height:14px;letter-spacing:-0.012px;">0046</span>
<div style="left:14px;top:367px;width:1116px;height:1px;background:#e9e9e9;"></div>
<div style="left:1237px;top:367px;width:160px;height:1px;background:#e9e9e9;"></div>
<div style="left:1431px;top:367px;width:139px;height:1px;background:#e9e9e9;"></div>
<div style="left:21px;top:374px;width:13px;height:13px;background:linear-gradient(135deg,#dcdcd7,#f3f3ef 55%,#ffffff);border:1px solid #2c4a60;box-sizing:border-box;"></div>
<span class="t" style="left:64.5px;top:375.00px;font-size:12px;line-height:14px;letter-spacing:0.088px;">0033</span>
<div style="left:127px;top:372px;width:51px;height:18px;background:#fff;border:1px solid #f0f0f0;border-top-color:#6f6f6f;border-left-color:#6f6f6f;box-sizing:border-box;overflow:hidden;"></div>
<div style="left:188px;top:372px;width:44px;height:18px;background:#fff;border:1px solid #f0f0f0;border-top-color:#6f6f6f;border-left-color:#6f6f6f;box-sizing:border-box;overflow:hidden;"></div>
<div style="left:242px;top:372px;width:104px;height:18px;background:#fff;border:1px solid #f0f0f0;border-top-color:#6f6f6f;border-left-color:#6f6f6f;box-sizing:border-box;overflow:hidden;"></div>
<div style="left:501px;top:372px;width:135px;height:18px;background:#fff;border:1px solid #f0f0f0;border-top-color:#6f6f6f;border-left-color:#6f6f6f;box-sizing:border-box;overflow:hidden;"></div>
<div style="left:653px;top:372px;width:51px;height:18px;background:#fff;border:1px solid #f0f0f0;border-top-color:#6f6f6f;border-left-color:#6f6f6f;box-sizing:border-box;overflow:hidden;"></div>
<div style="left:713px;top:372px;width:64px;height:18px;background:#fff;border:1px solid #f0f0f0;border-top-color:#6f6f6f;border-left-color:#6f6f6f;box-sizing:border-box;overflow:hidden;"></div>
<div style="left:787px;top:372px;width:62px;height:18px;background:#fff;border:1px solid #f0f0f0;border-top-color:#6f6f6f;border-left-color:#6f6f6f;box-sizing:border-box;overflow:hidden;"></div>
<div style="left:861px;top:372px;width:62px;height:18px;background:#fff;border:1px solid #f0f0f0;border-top-color:#6f6f6f;border-left-color:#6f6f6f;box-sizing:border-box;overflow:hidden;"></div>
<div style="left:935px;top:372px;width:68px;height:18px;background:#fff;border:1px solid #f0f0f0;border-top-color:#6f6f6f;border-left-color:#6f6f6f;box-sizing:border-box;overflow:hidden;"></div>
<div style="left:1015px;top:372px;width:63px;height:18px;background:#fff;border:1px solid #f0f0f0;border-top-color:#6f6f6f;border-left-color:#6f6f6f;box-sizing:border-box;overflow:hidden;"></div>
<div style="left:1325px;top:372px;width:62px;height:18px;background:#fff;border:1px solid #f0f0f0;border-top-color:#6f6f6f;border-left-color:#6f6f6f;box-sizing:border-box;overflow:hidden;"></div>
<div style="left:1433px;top:372px;width:135px;height:18px;background:#fff;border:1px solid #f0f0f0;border-top-color:#6f6f6f;border-left-color:#6f6f6f;box-sizing:border-box;overflow:hidden;"></div>
<div style="left:390px;top:373px;width:74px;height:19px;background:#fff;border:1px solid #f0f0f0;border-top-color:#6f6f6f;border-left-color:#6f6f6f;box-sizing:border-box;overflow:hidden;"></div>
<span class="t" style="left:130.4px;top:375.00px;font-size:12px;line-height:14px;letter-spacing:-0.255px;">1.00</span>
<span class="t" style="left:190.6px;top:375.00px;font-size:12px;line-height:14px;letter-spacing:0.115px;">Each</span>
<span class="t" style="left:244.4px;top:375.00px;font-size:12px;line-height:14px;letter-spacing:0.337px;">5508-33</span>
<svg style="position:absolute;left:468px;top:369px" width="20" height="20" viewBox="0 0 20 20"><defs><radialGradient id="lg6" cx="40%" cy="35%" r="70%"><stop offset="0" stop-color="#fff"/><stop offset=".6" stop-color="#e6e6e6"/><stop offset="1" stop-color="#bdbdbd"/></radialGradient></defs><path d="M8.6 11.6 L2.2 18.2" stroke="#6a6a6a" stroke-width="2.4" stroke-linecap="round"/><path d="M9.2 11.2 L3 17.6" stroke="#9a9a9a" stroke-width="1"/><circle cx="12.6" cy="7" r="5.6" fill="url(#lg6)" stroke="#8c8c8c" stroke-width="1.5"/><circle cx="12.6" cy="7" r="3.2" fill="none" stroke="#c9c9c9" stroke-width="1"/></svg>
<span class="t" style="left:393px;top:377.00px;font-size:12px;line-height:14px;letter-spacing:-0.297px;">FL</span>
<span class="t" style="left:503.4px;top:375.00px;font-size:12px;line-height:14px;width:131.5px;overflow:hidden;letter-spacing:0.379px;">FLSA182-F3043/4In3</span>
<span class="t" style="left:655.2px;top:375.00px;font-size:12px;line-height:14px;width:47.6px;overflow:hidden;letter-spacing:0.1px;">SA182-F</span>
<span class="t" style="left:789.9px;top:375.00px;font-size:12px;line-height:14px;letter-spacing:-0.133px;">3.0000</span>
<span class="t" style="left:864.2px;top:375.00px;font-size:12px;line-height:14px;letter-spacing:-0.133px;">1.0000</span>
<div style="left:1089px;top:371px;width:35px;height:20px;background:#ccccff;border:1px solid #4062c4;border-right-color:#2c4cac;border-bottom-color:#2c4cac;box-sizing:border-box;"></div>
<span class="t" style="left:1094.8px;top:375.00px;font-size:12px;line-height:14px;font-weight:bold;letter-spacing:-0.956px;">Add</span>
<span class="t" style="left:1240.6px;top:375.00px;font-size:12px;line-height:14px;letter-spacing:-0.012px;">0047</span>
<div style="left:14px;top:395px;width:1116px;height:1px;background:#e9e9e9;"></div>
<div style="left:1237px;top:395px;width:160px;height:1px;background:#e9e9e9;"></div>
<div style="left:1431px;top:395px;width:139px;height:1px;background:#e9e9e9;"></div>
<div style="left:21px;top:402px;width:13px;height:13px;background:linear-gradient(135deg,#dcdcd7,#f3f3ef 55%,#ffffff);border:1px solid #2c4a60;box-sizing:border-box;"></div>
<span class="t" style="left:64.5px;top:403.00px;font-size:12px;line-height:14px;letter-spacing:0.088px;">0034</span>
<div style="left:127px;top:400px;width:51px;height:18px;background:#fff;border:1px solid #f0f0f0;border-top-color:#6f6f6f;border-left-color:#6f6f6f;box-sizing:border-box;overflow:hidden;"></div>
<div style="left:188px;top:400px;width:44px;height:18px;background:#fff;border:1px solid #f0f0f0;border-top-color:#6f6f6f;border-left-color:#6f6f6f;box-sizing:border-box;overflow:hidden;"></div>
<div style="left:242px;top:400px;width:104px;height:18px;background:#fff;border:1px solid #f0f0f0;border-top-color:#6f6f6f;border-left-color:#6f6f6f;box-sizing:border-box;overflow:hidden;"></div>
<div style="left:501px;top:400px;width:135px;height:18px;background:#fff;border:1px solid #f0f0f0;border-top-color:#6f6f6f;border-left-color:#6f6f6f;box-sizing:border-box;overflow:hidden;"></div>
<div style="left:653px;top:400px;width:51px;height:18px;background:#fff;border:1px solid #f0f0f0;border-top-color:#6f6f6f;border-left-color:#6f6f6f;box-sizing:border-box;overflow:hidden;"></div>
<div style="left:713px;top:400px;width:64px;height:18px;background:#fff;border:1px solid #f0f0f0;border-top-color:#6f6f6f;border-left-color:#6f6f6f;box-sizing:border-box;overflow:hidden;"></div>
<div style="left:787px;top:400px;width:62px;height:18px;background:#fff;border:1px solid #f0f0f0;border-top-color:#6f6f6f;border-left-color:#6f6f6f;box-sizing:border-box;overflow:hidden;"></div>
<div style="left:861px;top:400px;width:62px;height:18px;background:#fff;border:1px solid #f0f0f0;border-top-color:#6f6f6f;border-left-color:#6f6f6f;box-sizing:border-box;overflow:hidden;"></div>
<div style="left:935px;top:400px;width:68px;height:18px;background:#fff;border:1px solid #f0f0f0;border-top-color:#6f6f6f;border-left-color:#6f6f6f;box-sizing:border-box;overflow:hidden;"></div>
<div style="left:1015px;top:400px;width:63px;height:18px;background:#fff;border:1px solid #f0f0f0;border-top-color:#6f6f6f;border-left-color:#6f6f6f;box-sizing:border-box;overflow:hidden;"></div>
<div style="left:1325px;top:400px;width:62px;height:18px;background:#fff;border:1px solid #f0f0f0;border-top-color:#6f6f6f;border-left-color:#6f6f6f;box-sizing:border-box;overflow:hidden;"></div>
<div style="left:1433px;top:400px;width:135px;height:18px;background:#fff;border:1px solid #f0f0f0;border-top-color:#6f6f6f;border-left-color:#6f6f6f;box-sizing:border-box;overflow:hidden;"></div>
<div style="left:390px;top:401px;width:74px;height:19px;background:#fff;border:1px solid #f0f0f0;border-top-color:#6f6f6f;border-left-color:#6f6f6f;box-sizing:border-box;overflow:hidden;"></div>
<span class="t" style="left:130.4px;top:403.00px;font-size:12px;line-height:14px;letter-spacing:-0.255px;">1.00</span>
<span class="t" style="left:190.6px;top:403.00px;font-size:12px;line-height:14px;letter-spacing:0.115px;">Each</span>
<span class="t" style="left:244.4px;top:403.00px;font-size:12px;line-height:14px;letter-spacing:0.337px;">5508-34</span>
<svg style="position:absolute;left:468px;top:397px" width="20" height="20" viewBox="0 0 20 20"><defs><radialGradient id="lg7" cx="40%" cy="35%" r="70%"><stop offset="0" stop-color="#fff"/><stop offset=".6" stop-color="#e6e6e6"/><stop offset="1" stop-color="#bdbdbd"/></radialGradient></defs><path d="M8.6 11.6 L2.2 18.2" stroke="#6a6a6a" stroke-width="2.4" stroke-linecap="round"/><path d="M9.2 11.2 L3 17.6" stroke="#9a9a9a" stroke-width="1"/><circle cx="12.6" cy="7" r="5.6" fill="url(#lg7)" stroke="#8c8c8c" stroke-width="1.5"/><circle cx="12.6" cy="7" r="3.2" fill="none" stroke="#c9c9c9" stroke-width="1"/></svg>
<span class="t" style="left:393px;top:405.00px;font-size:12px;line-height:14px;letter-spacing:-0.297px;">FL</span>
<span class="t" style="left:503.4px;top:403.00px;font-size:12px;line-height:14px;width:131.5px;overflow:hidden;letter-spacing:0.379px;">FLSA182-F3043/4In3</span>
<span class="t" style="left:655.2px;top:403.00px;font-size:12px;line-height:14px;width:47.6px;overflow:hidden;letter-spacing:0.1px;">SA182-F</span>
<span class="t" style="left:789.9px;top:403.00px;font-size:12px;line-height:14px;letter-spacing:-0.133px;">3.0000</span>
<span class="t" style="left:864.2px;top:403.00px;font-size:12px;line-height:14px;letter-spacing:-0.133px;">1.0000</span>
<div style="left:1089px;top:399px;width:35px;height:20px;background:#ccccff;border:1px solid #4062c4;border-right-color:#2c4cac;border-bottom-color:#2c4cac;box-sizing:border-box;"></div>
<span class="t" style="left:1094.8px;top:403.00px;font-size:12px;line-height:14px;font-weight:bold;letter-spacing:-0.956px;">Add</span>
<span class="t" style="left:1240.6px;top:403.00px;font-size:12px;line-height:14px;letter-spacing:-0.012px;">0047</span>
<div style="left:14px;top:422px;width:1116px;height:1px;background:#e9e9e9;"></div>
<div style="left:1237px;top:422px;width:160px;height:1px;background:#e9e9e9;"></div>
<div style="left:1431px;top:422px;width:139px;height:1px;background:#e9e9e9;"></div>
<div style="left:21px;top:429px;width:13px;height:13px;background:linear-gradient(135deg,#dcdcd7,#f3f3ef 55%,#ffffff);border:1px solid #2c4a60;box-sizing:border-box;"></div>
<span class="t" style="left:64.5px;top:430.00px;font-size:12px;line-height:14px;letter-spacing:0.088px;">0035</span>
<div style="left:127px;top:427px;width:51px;height:18px;background:#fff;border:1px solid #f0f0f0;border-top-color:#6f6f6f;border-left-color:#6f6f6f;box-sizing:border-box;overflow:hidden;"></div>
<div style="left:188px;top:427px;width:44px;height:18px;background:#fff;border:1px solid #f0f0f0;border-top-color:#6f6f6f;border-left-color:#6f6f6f;box-sizing:border-box;overflow:hidden;"></div>
<div style="left:242px;top:427px;width:104px;height:18px;background:#fff;border:1px solid #f0f0f0;border-top-color:#6f6f6f;border-left-color:#6f6f6f;box-sizing:border-box;overflow:hidden;"></div>
<div style="left:501px;top:427px;width:135px;height:18px;background:#fff;border:1px solid #f0f0f0;border-top-color:#6f6f6f;border-left-color:#6f6f6f;box-sizing:border-box;overflow:hidden;"></div>
<div style="left:653px;top:427px;width:51px;height:18px;background:#fff;border:1px solid #f0f0f0;border-top-color:#6f6f6f;border-left-color:#6f6f6f;box-sizing:border-box;overflow:hidden;"></div>
<div style="left:713px;top:427px;width:64px;height:18px;background:#fff;border:1px solid #f0f0f0;border-top-color:#6f6f6f;border-left-color:#6f6f6f;box-sizing:border-box;overflow:hidden;"></div>
<div style="left:787px;top:427px;width:62px;height:18px;background:#fff;border:1px solid #f0f0f0;border-top-color:#6f6f6f;border-left-color:#6f6f6f;box-sizing:border-box;overflow:hidden;"></div>
<div style="left:861px;top:427px;width:62px;height:18px;background:#fff;border:1px solid #f0f0f0;border-top-color:#6f6f6f;border-left-color:#6f6f6f;box-sizing:border-box;overflow:hidden;"></div>
<div style="left:935px;top:427px;width:68px;height:18px;background:#fff;border:1px solid #f0f0f0;border-top-color:#6f6f6f;border-left-color:#6f6f6f;box-sizing:border-box;overflow:hidden;"></div>
<div style="left:1015px;top:427px;width:63px;height:18px;background:#fff;border:1px solid #f0f0f0;border-top-color:#6f6f6f;border-left-color:#6f6f6f;box-sizing:border-box;overflow:hidden;"></div>
<div style="left:1325px;top:427px;width:62px;height:18px;background:#fff;border:1px solid #f0f0f0;border-top-color:#6f6f6f;border-left-color:#6f6f6f;box-sizing:border-box;overflow:hidden;"></div>
<div style="left:1433px;top:427px;width:135px;height:18px;background:#fff;border:1px solid #f0f0f0;border-top-color:#6f6f6f;border-left-color:#6f6f6f;box-sizing:border-box;overflow:hidden;"></div>
<div style="left:390px;top:428px;width:74px;height:19px;background:#fff;border:1px solid #f0f0f0;border-top-color:#6f6f6f;border-left-color:#6f6f6f;box-sizing:border-box;overflow:hidden;"></div>
<span class="t" style="left:130.4px;top:430.00px;font-size:12px;line-height:14px;letter-spacing:-0.255px;">1.00</span>
<span class="t" style="left:190.6px;top:430.00px;font-size:12px;line-height:14px;letter-spacing:0.115px;">Each</span>
<span class="t" style="left:244.4px;top:430.00px;font-size:12px;line-height:14px;letter-spacing:0.337px;">5508-35</span>
<svg style="position:absolute;left:468px;top:424px" width="20" height="20" viewBox="0 0 20 20"><defs><radialGradient id="lg8" cx="40%" cy="35%" r="70%"><stop offset="0" stop-color="#fff"/><stop offset=".6" stop-color="#e6e6e6"/><stop offset="1" stop-color="#bdbdbd"/></radialGradient></defs><path d="M8.6 11.6 L2.2 18.2" stroke="#6a6a6a" stroke-width="2.4" stroke-linecap="round"/><path d="M9.2 11.2 L3 17.6" stroke="#9a9a9a" stroke-width="1"/><circle cx="12.6" cy="7" r="5.6" fill="url(#lg8)" stroke="#8c8c8c" stroke-width="1.5"/><circle cx="12.6" cy="7" r="3.2" fill="none" stroke="#c9c9c9" stroke-width="1"/></svg>
<span class="t" style="left:393px;top:432.00px;font-size:12px;line-height:14px;letter-spacing:-0.297px;">FL</span>
<span class="t" style="left:503.4px;top:430.00px;font-size:12px;line-height:14px;width:131.5px;overflow:hidden;letter-spacing:0.379px;">FLSA182-F3043/4In3</span>
<span class="t" style="left:655.2px;top:430.00px;font-size:12px;line-height:14px;width:47.6px;overflow:hidden;letter-spacing:0.1px;">SA182-F</span>
<span class="t" style="left:789.9px;top:430.00px;font-size:12px;line-height:14px;letter-spacing:-0.133px;">3.0000</span>
<span class="t" style="left:864.2px;top:430.00px;font-size:12px;line-height:14px;letter-spacing:-0.133px;">1.0000</span>
<div style="left:1089px;top:426px;width:35px;height:20px;background:#ccccff;border:1px solid #4062c4;border-right-color:#2c4cac;border-bottom-color:#2c4cac;box-sizing:border-box;"></div>
<span class="t" style="left:1094.8px;top:430.00px;font-size:12px;line-height:14px;font-weight:bold;letter-spacing:-0.956px;">Add</span>
<span class="t" style="left:1240.6px;top:430.00px;font-size:12px;line-height:14px;letter-spacing:-0.012px;">0047</span>
<div style="left:14px;top:449px;width:1116px;height:1px;background:#e9e9e9;"></div>
<div style="left:1237px;top:449px;width:160px;height:1px;background:#e9e9e9;"></div>
<div style="left:1431px;top:449px;width:139px;height:1px;background:#e9e9e9;"></div>
<div style="left:21px;top:456px;width:13px;height:13px;background:linear-gradient(135deg,#dcdcd7,#f3f3ef 55%,#ffffff);border:1px solid #2c4a60;box-sizing:border-box;"></div>
<span class="t" style="left:64.5px;top:457.00px;font-size:12px;line-height:14px;letter-spacing:0.088px;">0036</span>
<div style="left:127px;top:454px;width:51px;height:18px;background:#fff;border:1px solid #f0f0f0;border-top-color:#6f6f6f;border-left-color:#6f6f6f;box-sizing:border-box;overflow:hidden;"></div>
<div style="left:188px;top:454px;width:44px;height:18px;background:#fff;border:1px solid #f0f0f0;border-top-color:#6f6f6f;border-left-color:#6f6f6f;box-sizing:border-box;overflow:hidden;"></div>
<div style="left:242px;top:454px;width:104px;height:18px;background:#fff;border:1px solid #f0f0f0;border-top-color:#6f6f6f;border-left-color:#6f6f6f;box-sizing:border-box;overflow:hidden;"></div>
<div style="left:501px;top:454px;width:135px;height:18px;background:#fff;border:1px solid #f0f0f0;border-top-color:#6f6f6f;border-left-color:#6f6f6f;box-sizing:border-box;overflow:hidden;"></div>
<div style="left:653px;top:454px;width:51px;height:18px;background:#fff;border:1px solid #f0f0f0;border-top-color:#6f6f6f;border-left-color:#6f6f6f;box-sizing:border-box;overflow:hidden;"></div>
<div style="left:713px;top:454px;width:64px;height:18px;background:#fff;border:1px solid #f0f0f0;border-top-color:#6f6f6f;border-left-color:#6f6f6f;box-sizing:border-box;overflow:hidden;"></div>
<div style="left:787px;top:454px;width:62px;height:18px;background:#fff;border:1px solid #f0f0f0;border-top-color:#6f6f6f;border-left-color:#6f6f6f;box-sizing:border-box;overflow:hidden;"></div>
<div style="left:861px;top:454px;width:62px;height:18px;background:#fff;border:1px solid #f0f0f0;border-top-color:#6f6f6f;border-left-color:#6f6f6f;box-sizing:border-box;overflow:hidden;"></div>
<div style="left:935px;top:454px;width:68px;height:18px;background:#fff;border:1px solid #f0f0f0;border-top-color:#6f6f6f;border-left-color:#6f6f6f;box-sizing:border-box;overflow:hidden;"></div>
<div style="left:1015px;top:454px;width:63px;height:18px;background:#fff;border:1px solid #f0f0f0;border-top-color:#6f6f6f;border-left-color:#6f6f6f;box-sizing:border-box;overflow:hidden;"></div>
<div style="left:1325px;top:454px;width:62px;height:18px;background:#fff;border:1px solid #f0f0f0;border-top-color:#6f6f6f;border-left-color:#6f6f6f;box-sizing:border-box;overflow:hidden;"></div>
<div style="left:1433px;top:454px;width:135px;height:18px;background:#fff;border:1px solid #f0f0f0;border-top-color:#6f6f6f;border-left-color:#6f6f6f;box-sizing:border-box;overflow:hidden;"></div>
<div style="left:390px;top:455px;width:74px;height:19px;background:#fff;border:1px solid #f0f0f0;border-top-color:#6f6f6f;border-left-color:#6f6f6f;box-sizing:border-box;overflow:hidden;"></div>
<span class="t" style="left:130.4px;top:457.00px;font-size:12px;line-height:14px;letter-spacing:-0.255px;">1.00</span>
<span class="t" style="left:190.6px;top:457.00px;font-size:12px;line-height:14px;letter-spacing:0.115px;">Each</span>
<span class="t" style="left:244.4px;top:457.00px;font-size:12px;line-height:14px;letter-spacing:0.337px;">5508-36</span>
<svg style="position:absolute;left:468px;top:451px" width="20" height="20" viewBox="0 0 20 20"><defs><radialGradient id="lg9" cx="40%" cy="35%" r="70%"><stop offset="0" stop-color="#fff"/><stop offset=".6" stop-color="#e6e6e6"/><stop offset="1" stop-color="#bdbdbd"/></radialGradient></defs><path d="M8.6 11.6 L2.2 18.2" stroke="#6a6a6a" stroke-width="2.4" stroke-linecap="round"/><path d="M9.2 11.2 L3 17.6" stroke="#9a9a9a" stroke-width="1"/><circle cx="12.6" cy="7" r="5.6" fill="url(#lg9)" stroke="#8c8c8c" stroke-width="1.5"/><circle cx="12.6" cy="7" r="3.2" fill="none" stroke="#c9c9c9" stroke-width="1"/></svg>
<span class="t" style="left:393px;top:459.00px;font-size:12px;line-height:14px;letter-spacing:-0.297px;">FL</span>
<span class="t" style="left:503.4px;top:457.00px;font-size:12px;line-height:14px;width:131.5px;overflow:hidden;letter-spacing:0.379px;">FLSA182-F3043/4In3</span>
<span class="t" style="left:655.2px;top:457.00px;font-size:12px;line-height:14px;width:47.6px;overflow:hidden;letter-spacing:0.1px;">SA182-F</span>
<span class="t" style="left:789.9px;top:457.00px;font-size:12px;line-height:14px;letter-spacing:-0.133px;">3.0000</span>
<span class="t" style="left:864.2px;top:457.00px;font-size:12px;line-height:14px;letter-spacing:-0.133px;">1.0000</span>
<div style="left:1089px;top:453px;width:35px;height:20px;background:#ccccff;border:1px solid #4062c4;border-right-color:#2c4cac;border-bottom-color:#2c4cac;box-sizing:border-box;"></div>
<span class="t" style="left:1094.8px;top:457.00px;font-size:12px;line-height:14px;font-weight:bold;letter-spacing:-0.956px;">Add</span>
<span class="t" style="left:1240.6px;top:457.00px;font-size:12px;line-height:14px;letter-spacing:-0.012px;">0047</span>
<div style="left:14px;top:477px;width:1116px;height:1px;background:#e9e9e9;"></div>
<div style="left:1237px;top:477px;width:160px;height:1px;background:#e9e9e9;"></div>
<div style="left:1431px;top:477px;width:139px;height:1px;background:#e9e9e9;"></div>
<div style="left:21px;top:484px;width:13px;height:13px;background:linear-gradient(135deg,#dcdcd7,#f3f3ef 55%,#ffffff);border:1px solid #2c4a60;box-sizing:border-box;"></div>
<span class="t" style="left:64.5px;top:485.00px;font-size:12px;line-height:14px;letter-spacing:0.088px;">0037</span>
<div style="left:127px;top:482px;width:51px;height:18px;background:#fff;border:1px solid #f0f0f0;border-top-color:#6f6f6f;border-left-color:#6f6f6f;box-sizing:border-box;overflow:hidden;"></div>
<div style="left:188px;top:482px;width:44px;height:18px;background:#fff;border:1px solid #f0f0f0;border-top-color:#6f6f6f;border-left-color:#6f6f6f;box-sizing:border-box;overflow:hidden;"></div>
<div style="left:242px;top:482px;width:104px;height:18px;background:#fff;border:1px solid #f0f0f0;border-top-color:#6f6f6f;border-left-color:#6f6f6f;box-sizing:border-box;overflow:hidden;"></div>
<div style="left:501px;top:482px;width:135px;height:18px;background:#fff;border:1px solid #f0f0f0;border-top-color:#6f6f6f;border-left-color:#6f6f6f;box-sizing:border-box;overflow:hidden;"></div>
<div style="left:653px;top:482px;width:51px;height:18px;background:#fff;border:1px solid #f0f0f0;border-top-color:#6f6f6f;border-left-color:#6f6f6f;box-sizing:border-box;overflow:hidden;"></div>
<div style="left:713px;top:482px;width:64px;height:18px;background:#fff;border:1px solid #f0f0f0;border-top-color:#6f6f6f;border-left-color:#6f6f6f;box-sizing:border-box;overflow:hidden;"></div>
<div style="left:787px;top:482px;width:62px;height:18px;background:#fff;border:1px solid #f0f0f0;border-top-color:#6f6f6f;border-left-color:#6f6f6f;box-sizing:border-box;overflow:hidden;"></div>
<div style="left:861px;top:482px;width:62px;height:18px;background:#fff;border:1px solid #f0f0f0;border-top-color:#6f6f6f;border-left-color:#6f6f6f;box-sizing:border-box;overflow:hidden;"></div>
<div style="left:935px;top:482px;width:68px;height:18px;background:#fff;border:1px solid #f0f0f0;border-top-color:#6f6f6f;border-left-color:#6f6f6f;box-sizing:border-box;overflow:hidden;"></div>
<div style="left:1015px;top:482px;width:63px;height:18px;background:#fff;border:1px solid #f0f0f0;border-top-color:#6f6f6f;border-left-color:#6f6f6f;box-sizing:border-box;overflow:hidden;"></div>
<div style="left:1325px;top:482px;width:62px;height:18px;background:#fff;border:1px solid #f0f0f0;border-top-color:#6f6f6f;border-left-color:#6f6f6f;box-sizing:border-box;overflow:hidden;"></div>
<div style="left:1433px;top:482px;width:135px;height:18px;background:#fff;border:1px solid #f0f0f0;border-top-color:#6f6f6f;border-left-color:#6f6f6f;box-sizing:border-box;overflow:hidden;"></div>
<div style="left:390px;top:483px;width:74px;height:19px;background:#fff;border:1px solid #f0f0f0;border-top-color:#6f6f6f;border-left-color:#6f6f6f;box-sizing:border-box;overflow:hidden;"></div>
<span class="t" style="left:130.4px;top:485.00px;font-size:12px;line-height:14px;letter-spacing:-0.255px;">1.00</span>
<span class="t" style="left:190.6px;top:485.00px;font-size:12px;line-height:14px;letter-spacing:0.115px;">Each</span>
<span class="t" style="left:244.4px;top:485.00px;font-size:12px;line-height:14px;letter-spacing:0.337px;">5508-37</span>
<svg style="position:absolute;left:468px;top:479px" width="20" height="20" viewBox="0 0 20 20"><defs><radialGradient id="lg10" cx="40%" cy="35%" r="70%"><stop offset="0" stop-color="#fff"/><stop offset=".6" stop-color="#e6e6e6"/><stop offset="1" stop-color="#bdbdbd"/></radialGradient></defs><path d="M8.6 11.6 L2.2 18.2" stroke="#6a6a6a" stroke-width="2.4" stroke-linecap="round"/><path d="M9.2 11.2 L3 17.6" stroke="#9a9a9a" stroke-width="1"/><circle cx="12.6" cy="7" r="5.6" fill="url(#lg10)" stroke="#8c8c8c" stroke-width="1.5"/><circle cx="12.6" cy="7" r="3.2" fill="none" stroke="#c9c9c9" stroke-width="1"/></svg>
<span class="t" style="left:393px;top:487.00px;font-size:12px;line-height:14px;letter-spacing:-0.297px;">FL</span>
<span class="t" style="left:503.4px;top:485.00px;font-size:12px;line-height:14px;width:131.5px;overflow:hidden;letter-spacing:0.379px;">FLSA182-F3043/4In3</span>
<span class="t" style="left:655.2px;top:485.00px;font-size:12px;line-height:14px;width:47.6px;overflow:hidden;letter-spacing:0.1px;">SA182-F</span>
<span class="t" style="left:789.9px;top:485.00px;font-size:12px;line-height:14px;letter-spacing:-0.133px;">3.0000</span>
<span class="t" style="left:864.2px;top:485.00px;font-size:12px;line-height:14px;letter-spacing:-0.133px;">1.0000</span>
<div style="left:1089px;top:481px;width:35px;height:20px;background:#ccccff;border:1px solid #4062c4;border-right-color:#2c4cac;border-bottom-color:#2c4cac;box-sizing:border-box;"></div>
<span class="t" style="left:1094.8px;top:485.00px;font-size:12px;line-height:14px;font-weight:bold;letter-spacing:-0.956px;">Add</span>
<span class="t" style="left:1240.6px;top:485.00px;font-size:12px;line-height:14px;letter-spacing:-0.012px;">0047</span>
<div style="left:14px;top:504px;width:1116px;height:1px;background:#e9e9e9;"></div>
<div style="left:1237px;top:504px;width:160px;height:1px;background:#e9e9e9;"></div>
<div style="left:1431px;top:504px;width:139px;height:1px;background:#e9e9e9;"></div>
<div style="left:21px;top:511px;width:13px;height:13px;background:linear-gradient(135deg,#dcdcd7,#f3f3ef 55%,#ffffff);border:1px solid #2c4a60;box-sizing:border-box;"></div>
<span class="t" style="left:64.5px;top:512.00px;font-size:12px;line-height:14px;letter-spacing:0.088px;">0038</span>
<div style="left:127px;top:509px;width:51px;height:18px;background:#fff;border:1px solid #f0f0f0;border-top-color:#6f6f6f;border-left-color:#6f6f6f;box-sizing:border-box;overflow:hidden;"></div>
<div style="left:188px;top:509px;width:44px;height:18px;background:#fff;border:1px solid #f0f0f0;border-top-color:#6f6f6f;border-left-color:#6f6f6f;box-sizing:border-box;overflow:hidden;"></div>
<div style="left:242px;top:509px;width:104px;height:18px;background:#fff;border:1px solid #f0f0f0;border-top-color:#6f6f6f;border-left-color:#6f6f6f;box-sizing:border-box;overflow:hidden;"></div>
<div style="left:501px;top:509px;width:135px;height:18px;background:#fff;border:1px solid #f0f0f0;border-top-color:#6f6f6f;border-left-color:#6f6f6f;box-sizing:border-box;overflow:hidden;"></div>
<div style="left:653px;top:509px;width:51px;height:18px;background:#fff;border:1px solid #f0f0f0;border-top-color:#6f6f6f;border-left-color:#6f6f6f;box-sizing:border-box;overflow:hidden;"></div>
<div style="left:713px;top:509px;width:64px;height:18px;background:#fff;border:1px solid #f0f0f0;border-top-color:#6f6f6f;border-left-color:#6f6f6f;box-sizing:border-box;overflow:hidden;"></div>
<div style="left:787px;top:509px;width:62px;height:18px;background:#fff;border:1px solid #f0f0f0;border-top-color:#6f6f6f;border-left-color:#6f6f6f;box-sizing:border-box;overflow:hidden;"></div>
<div style="left:861px;top:509px;width:62px;height:18px;background:#fff;border:1px solid #f0f0f0;border-top-color:#6f6f6f;border-left-color:#6f6f6f;box-sizing:border-box;overflow:hidden;"></div>
<div style="left:935px;top:509px;width:68px;height:18px;background:#fff;border:1px solid #f0f0f0;border-top-color:#6f6f6f;border-left-color:#6f6f6f;box-sizing:border-box;overflow:hidden;"></div>
<div style="left:1015px;top:509px;width:63px;height:18px;background:#fff;border:1px solid #f0f0f0;border-top-color:#6f6f6f;border-left-color:#6f6f6f;box-sizing:border-box;overflow:hidden;"></div>
<div style="left:1325px;top:509px;width:62px;height:18px;background:#fff;border:1px solid #f0f0f0;border-top-color:#6f6f6f;border-left-color:#6f6f6f;box-sizing:border-box;overflow:hidden;"></div>
<div style="left:1433px;top:509px;width:135px;height:18px;background:#fff;border:1px solid #f0f0f0;border-top-color:#6f6f6f;border-left-color:#6f6f6f;box-sizing:border-box;overflow:hidden;"></div>
<div style="left:390px;top:510px;width:74px;height:19px;background:#fff;border:1px solid #f0f0f0;border-top-color:#6f6f6f;border-left-color:#6f6f6f;box-sizing:border-box;overflow:hidden;"></div>
<span class="t" style="left:130.4px;top:512.00px;font-size:12px;line-height:14px;letter-spacing:-0.255px;">1.00</span>
<span class="t" style="left:190.6px;top:512.00px;font-size:12px;line-height:14px;letter-spacing:0.115px;">Each</span>
<span class="t" style="left:244.4px;top:512.00px;font-size:12px;line-height:14px;letter-spacing:0.337px;">5508-38</span>
<svg style="position:absolute;left:468px;top:506px" width="20" height="20" viewBox="0 0 20 20"><defs><radialGradient id="lg11" cx="40%" cy="35%" r="70%"><stop offset="0" stop-color="#fff"/><stop offset=".6" stop-color="#e6e6e6"/><stop offset="1" stop-color="#bdbdbd"/></radialGradient></defs><path d="M8.6 11.6 L2.2 18.2" stroke="#6a6a6a" stroke-width="2.4" stroke-linecap="round"/><path d="M9.2 11.2 L3 17.6" stroke="#9a9a9a" stroke-width="1"/><circle cx="12.6" cy="7" r="5.6" fill="url(#lg11)" stroke="#8c8c8c" stroke-width="1.5"/><circle cx="12.6" cy="7" r="3.2" fill="none" stroke="#c9c9c9" stroke-width="1"/></svg>
<span class="t" style="left:393px;top:514.00px;font-size:12px;line-height:14px;letter-spacing:-0.297px;">FL</span>
<span class="t" style="left:503.4px;top:512.00px;font-size:12px;line-height:14px;width:131.5px;overflow:hidden;letter-spacing:0.379px;">FLSA182-F3043/4In3</span>
<span class="t" style="left:655.2px;top:512.00px;font-size:12px;line-height:14px;width:47.6px;overflow:hidden;letter-spacing:0.1px;">SA182-F</span>
<span class="t" style="left:789.9px;top:512.00px;font-size:12px;line-height:14px;letter-spacing:-0.133px;">3.0000</span>
<span class="t" style="left:864.2px;top:512.00px;font-size:12px;line-height:14px;letter-spacing:-0.133px;">1.0000</span>
<div style="left:1089px;top:508px;width:35px;height:20px;background:#ccccff;border:1px solid #4062c4;border-right-color:#2c4cac;border-bottom-color:#2c4cac;box-sizing:border-box;"></div>
<span class="t" style="left:1094.8px;top:512.00px;font-size:12px;line-height:14px;font-weight:bold;letter-spacing:-0.956px;">Add</span>
<span class="t" style="left:1240.6px;top:512.00px;font-size:12px;line-height:14px;letter-spacing:-0.012px;">0047</span>
<div style="left:14px;top:553px;width:1116px;height:1px;background:#e9e9e9;"></div>
<div style="left:1237px;top:553px;width:160px;height:1px;background:#e9e9e9;"></div>
<div style="left:1431px;top:553px;width:139px;height:1px;background:#e9e9e9;"></div>
<div style="left:21px;top:560px;width:13px;height:13px;background:linear-gradient(135deg,#dcdcd7,#f3f3ef 55%,#ffffff);border:1px solid #2c4a60;box-sizing:border-box;"></div>
<span class="t" style="left:64.5px;top:561.00px;font-size:12px;line-height:14px;letter-spacing:0.088px;">0040</span>
<div style="left:127px;top:558px;width:51px;height:18px;background:#fff;border:1px solid #f0f0f0;border-top-color:#6f6f6f;border-left-color:#6f6f6f;box-sizing:border-box;overflow:hidden;"></div>
<div style="left:188px;top:558px;width:44px;height:18px;background:#fff;border:1px solid #f0f0f0;border-top-color:#6f6f6f;border-left-color:#6f6f6f;box-sizing:border-box;overflow:hidden;"></div>
<div style="left:242px;top:558px;width:104px;height:18px;background:#fff;border:1px solid #f0f0f0;border-top-color:#6f6f6f;border-left-color:#6f6f6f;box-sizing:border-box;overflow:hidden;"></div>
<div style="left:501px;top:558px;width:135px;height:18px;background:#fff;border:1px solid #f0f0f0;border-top-color:#6f6f6f;border-left-color:#6f6f6f;box-sizing:border-box;overflow:hidden;"></div>
<div style="left:653px;top:558px;width:51px;height:18px;background:#fff;border:1px solid #f0f0f0;border-top-color:#6f6f6f;border-left-color:#6f6f6f;box-sizing:border-box;overflow:hidden;"></div>
<div style="left:713px;top:558px;width:64px;height:18px;background:#fff;border:1px solid #f0f0f0;border-top-color:#6f6f6f;border-left-color:#6f6f6f;box-sizing:border-box;overflow:hidden;"></div>
<div style="left:787px;top:558px;width:62px;height:18px;background:#fff;border:1px solid #f0f0f0;border-top-color:#6f6f6f;border-left-color:#6f6f6f;box-sizing:border-box;overflow:hidden;"></div>
<div style="left:861px;top:558px;width:62px;height:18px;background:#fff;border:1px solid #f0f0f0;border-top-color:#6f6f6f;border-left-color:#6f6f6f;box-sizing:border-box;overflow:hidden;"></div>
<div style="left:935px;top:558px;width:68px;height:18px;background:#fff;border:1px solid #f0f0f0;border-top-color:#6f6f6f;border-left-color:#6f6f6f;box-sizing:border-box;overflow:hidden;"></div>
<div style="left:1015px;top:558px;width:63px;height:18px;background:#fff;border:1px solid #f0f0f0;border-top-color:#6f6f6f;border-left-color:#6f6f6f;box-sizing:border-box;overflow:hidden;"></div>
<div style="left:1325px;top:558px;width:62px;height:18px;background:#fff;border:1px solid #f0f0f0;border-top-color:#6f6f6f;border-left-color:#6f6f6f;box-sizing:border-box;overflow:hidden;"></div>
<div style="left:1433px;top:558px;width:135px;height:18px;background:#fff;border:1px solid #f0f0f0;border-top-color:#6f6f6f;border-left-color:#6f6f6f;box-sizing:border-box;overflow:hidden;"></div>
<div style="left:390px;top:559px;width:74px;height:19px;background:#fff;border:1px solid #f0f0f0;border-top-color:#6f6f6f;border-left-color:#6f6f6f;box-sizing:border-box;overflow:hidden;"></div>
<span class="t" style="left:130.4px;top:561.00px;font-size:12px;line-height:14px;letter-spacing:-0.255px;">1.00</span>
<span class="t" style="left:190.6px;top:561.00px;font-size:12px;line-height:14px;letter-spacing:0.115px;">Each</span>
<span class="t" style="left:244.4px;top:561.00px;font-size:12px;line-height:14px;letter-spacing:0.337px;">5508-40</span>
<svg style="position:absolute;left:468px;top:555px" width="20" height="20" viewBox="0 0 20 20"><defs><radialGradient id="lg12" cx="40%" cy="35%" r="70%"><stop offset="0" stop-color="#fff"/><stop offset=".6" stop-color="#e6e6e6"/><stop offset="1" stop-color="#bdbdbd"/></radialGradient></defs><path d="M8.6 11.6 L2.2 18.2" stroke="#6a6a6a" stroke-width="2.4" stroke-linecap="round"/><path d="M9.2 11.2 L3 17.6" stroke="#9a9a9a" stroke-width="1"/><circle cx="12.6" cy="7" r="5.6" fill="url(#lg12)" stroke="#8c8c8c" stroke-width="1.5"/><circle cx="12.6" cy="7" r="3.2" fill="none" stroke="#c9c9c9" stroke-width="1"/></svg>
<span class="t" style="left:393px;top:563.00px;font-size:12px;line-height:14px;letter-spacing:-0.297px;">FL</span>
<span class="t" style="left:503.4px;top:561.00px;font-size:12px;line-height:14px;width:131.5px;overflow:hidden;letter-spacing:0.379px;">FLSA182-F3043/4In3</span>
<span class="t" style="left:655.2px;top:561.00px;font-size:12px;line-height:14px;width:47.6px;overflow:hidden;letter-spacing:0.1px;">SA182-F</span>
<span class="t" style="left:789.9px;top:561.00px;font-size:12px;line-height:14px;letter-spacing:-0.133px;">3.0000</span>
<span class="t" style="left:864.2px;top:561.00px;font-size:12px;line-height:14px;letter-spacing:-0.133px;">1.0000</span>
<div style="left:1089px;top:557px;width:35px;height:20px;background:#ccccff;border:1px solid #4062c4;border-right-color:#2c4cac;border-bottom-color:#2c4cac;box-sizing:border-box;"></div>
<span class="t" style="left:1094.8px;top:561.00px;font-size:12px;line-height:14px;font-weight:bold;letter-spacing:-0.956px;">Add</span>
<span class="t" style="left:1240.6px;top:561.00px;font-size:12px;line-height:14px;letter-spacing:-0.012px;">0046</span>
<div style="left:14px;top:580px;width:1116px;height:1px;background:#e9e9e9;"></div>
<div style="left:1237px;top:580px;width:160px;height:1px;background:#e9e9e9;"></div>
<div style="left:1431px;top:580px;width:139px;height:1px;background:#e9e9e9;"></div>
<div style="left:21px;top:587px;width:13px;height:13px;background:linear-gradient(135deg,#dcdcd7,#f3f3ef 55%,#ffffff);border:1px solid #2c4a60;box-sizing:border-box;"></div>
<span class="t" style="left:64.5px;top:588.00px;font-size:12px;line-height:14px;letter-spacing:0.088px;">0041</span>
<div style="left:127px;top:585px;width:51px;height:18px;background:#fff;border:1px solid #f0f0f0;border-top-color:#6f6f6f;border-left-color:#6f6f6f;box-sizing:border-box;overflow:hidden;"></div>
<div style="left:188px;top:585px;width:44px;height:18px;background:#fff;border:1px solid #f0f0f0;border-top-color:#6f6f6f;border-left-color:#6f6f6f;box-sizing:border-box;overflow:hidden;"></div>
<div style="left:242px;top:585px;width:104px;height:18px;background:#fff;border:1px solid #f0f0f0;border-top-color:#6f6f6f;border-left-color:#6f6f6f;box-sizing:border-box;overflow:hidden;"></div>
<div style="left:501px;top:585px;width:135px;height:18px;background:#fff;border:1px solid #f0f0f0;border-top-color:#6f6f6f;border-left-color:#6f6f6f;box-sizing:border-box;overflow:hidden;"></div>
<div style="left:653px;top:585px;width:51px;height:18px;background:#fff;border:1px solid #f0f0f0;border-top-color:#6f6f6f;border-left-color:#6f6f6f;box-sizing:border-box;overflow:hidden;"></div>
<div style="left:713px;top:585px;width:64px;height:18px;background:#fff;border:1px solid #f0f0f0;border-top-color:#6f6f6f;border-left-color:#6f6f6f;box-sizing:border-box;overflow:hidden;"></div>
<div style="left:787px;top:585px;width:62px;height:18px;background:#fff;border:1px solid #f0f0f0;border-top-color:#6f6f6f;border-left-color:#6f6f6f;box-sizing:border-box;overflow:hidden;"></div>
<div style="left:861px;top:585px;width:62px;height:18px;background:#fff;border:1px solid #f0f0f0;border-top-color:#6f6f6f;border-left-color:#6f6f6f;box-sizing:border-box;overflow:hidden;"></div>
<div style="left:935px;top:585px;width:68px;height:18px;background:#fff;border:1px solid #f0f0f0;border-top-color:#6f6f6f;border-left-color:#6f6f6f;box-sizing:border-box;overflow:hidden;"></div>
<div style="left:1015px;top:585px;width:63px;height:18px;background:#fff;border:1px solid #f0f0f0;border-top-color:#6f6f6f;border-left-color:#6f6f6f;box-sizing:border-box;overflow:hidden;"></div>
<div style="left:1325px;top:585px;width:62px;height:18px;background:#fff;border:1px solid #f0f0f0;border-top-color:#6f6f6f;border-left-color:#6f6f6f;box-sizing:border-box;overflow:hidden;"></div>
<div style="left:1433px;top:585px;width:135px;height:18px;background:#fff;border:1px solid #f0f0f0;border-top-color:#6f6f6f;border-left-color:#6f6f6f;box-sizing:border-box;overflow:hidden;"></div>
<div style="left:390px;top:586px;width:74px;height:19px;background:#fff;border:1px solid #f0f0f0;border-top-color:#6f6f6f;border-left-color:#6f6f6f;box-sizing:border-box;overflow:hidden;"></div>
<span class="t" style="left:130.4px;top:588.00px;font-size:12px;line-height:14px;letter-spacing:-0.255px;">1.00</span>
<span class="t" style="left:190.6px;top:588.00px;font-size:12px;line-height:14px;letter-spacing:0.115px;">Each</span>
<span class="t" style="left:244.4px;top:588.00px;font-size:12px;line-height:14px;letter-spacing:0.337px;">5508-41</span>
<svg style="position:absolute;left:468px;top:582px" width="20" height="20" viewBox="0 0 20 20"><defs><radialGradient id="lg13" cx="40%" cy="35%" r="70%"><stop offset="0" stop-color="#fff"/><stop offset=".6" stop-color="#e6e6e6"/><stop offset="1" stop-color="#bdbdbd"/></radialGradient></defs><path d="M8.6 11.6 L2.2 18.2" stroke="#6a6a6a" stroke-width="2.4" stroke-linecap="round"/><path d="M9.2 11.2 L3 17.6" stroke="#9a9a9a" stroke-width="1"/><circle cx="12.6" cy="7" r="5.6" fill="url(#lg13)" stroke="#8c8c8c" stroke-width="1.5"/><circle cx="12.6" cy="7" r="3.2" fill="none" stroke="#c9c9c9" stroke-width="1"/></svg>
<span class="t" style="left:393px;top:590.00px;font-size:12px;line-height:14px;letter-spacing:-0.297px;">FL</span>
<span class="t" style="left:503.4px;top:588.00px;font-size:12px;line-height:14px;width:131.5px;overflow:hidden;letter-spacing:0.379px;">FLSA182-F3043/4In3</span>
<span class="t" style="left:655.2px;top:588.00px;font-size:12px;line-height:14px;width:47.6px;overflow:hidden;letter-spacing:0.1px;">SA182-F</span>
<span class="t" style="left:789.9px;top:588.00px;font-size:12px;line-height:14px;letter-spacing:-0.133px;">3.0000</span>
<span class="t" style="left:864.2px;top:588.00px;font-size:12px;line-height:14px;letter-spacing:-0.133px;">1.0000</span>
<div style="left:1089px;top:584px;width:35px;height:20px;background:#ccccff;border:1px solid #4062c4;border-right-color:#2c4cac;border-bottom-color:#2c4cac;box-sizing:border-box;"></div>
<span class="t" style="left:1094.8px;top:588.00px;font-size:12px;line-height:14px;font-weight:bold;letter-spacing:-0.956px;">Add</span>
<span class="t" style="left:1240.6px;top:588.00px;font-size:12px;line-height:14px;letter-spacing:-0.012px;">0046</span>
<div style="left:14px;top:607px;width:1116px;height:1px;background:#e9e9e9;"></div>
<div style="left:1237px;top:607px;width:160px;height:1px;background:#e9e9e9;"></div>
<div style="left:1431px;top:607px;width:139px;height:1px;background:#e9e9e9;"></div>
<div style="left:21px;top:614px;width:13px;height:13px;background:linear-gradient(135deg,#dcdcd7,#f3f3ef 55%,#ffffff);border:1px solid #2c4a60;box-sizing:border-box;"></div>
<span class="t" style="left:48.5px;top:615.00px;font-size:12px;line-height:14px;color:#800080;text-decoration:underline;text-decoration-skip-ink:none;">+</span>
<span class="t" style="left:64.5px;top:615.00px;font-size:12px;line-height:14px;font-weight:bold;color:#800080;letter-spacing:0.398px;">0042</span>
<div style="left:127px;top:612px;width:51px;height:18px;background:#fff;border:1px solid #f0f0f0;border-top-color:#6f6f6f;border-left-color:#6f6f6f;box-sizing:border-box;overflow:hidden;"></div>
<div style="left:188px;top:612px;width:44px;height:18px;background:#fff;border:1px solid #f0f0f0;border-top-color:#6f6f6f;border-left-color:#6f6f6f;box-sizing:border-box;overflow:hidden;"></div>
<div style="left:242px;top:612px;width:104px;height:18px;background:#fff;border:1px solid #f0f0f0;border-top-color:#6f6f6f;border-left-color:#6f6f6f;box-sizing:border-box;overflow:hidden;"></div>
<div style="left:501px;top:612px;width:135px;height:18px;background:#fff;border:1px solid #f0f0f0;border-top-color:#6f6f6f;border-left-color:#6f6f6f;box-sizing:border-box;overflow:hidden;"></div>
<div style="left:653px;top:612px;width:51px;height:18px;background:#fff;border:1px solid #f0f0f0;border-top-color:#6f6f6f;border-left-color:#6f6f6f;box-sizing:border-box;overflow:hidden;"></div>
<div style="left:713px;top:612px;width:64px;height:18px;background:#fff;border:1px solid #f0f0f0;border-top-color:#6f6f6f;border-left-color:#6f6f6f;box-sizing:border-box;overflow:hidden;"></div>
<div style="left:787px;top:612px;width:62px;height:18px;background:#fff;border:1px solid #f0f0f0;border-top-color:#6f6f6f;border-left-color:#6f6f6f;box-sizing:border-box;overflow:hidden;"></div>
<div style="left:861px;top:612px;width:62px;height:18px;background:#fff;border:1px solid #f0f0f0;border-top-color:#6f6f6f;border-left-color:#6f6f6f;box-sizing:border-box;overflow:hidden;"></div>
<div style="left:935px;top:612px;width:68px;height:18px;background:#fff;border:1px solid #f0f0f0;border-top-color:#6f6f6f;border-left-color:#6f6f6f;box-sizing:border-box;overflow:hidden;"></div>
<div style="left:1015px;top:612px;width:63px;height:18px;background:#fff;border:1px solid #f0f0f0;border-top-color:#6f6f6f;border-left-color:#6f6f6f;box-sizing:border-box;overflow:hidden;"></div>
<div style="left:1325px;top:612px;width:62px;height:18px;background:#fff;border:1px solid #f0f0f0;border-top-color:#6f6f6f;border-left-color:#6f6f6f;box-sizing:border-box;overflow:hidden;"></div>
<div style="left:1433px;top:612px;width:135px;height:18px;background:#fff;border:1px solid #f0f0f0;border-top-color:#6f6f6f;border-left-color:#6f6f6f;box-sizing:border-box;overflow:hidden;"></div>
<div style="left:390px;top:613px;width:74px;height:19px;background:#fff;border:1px solid #f0f0f0;border-top-color:#6f6f6f;border-left-color:#6f6f6f;box-sizing:border-box;overflow:hidden;"></div>
<span class="t" style="left:130.4px;top:615.00px;font-size:12px;line-height:14px;letter-spacing:-0.255px;">1.00</span>
<span class="t" style="left:190.6px;top:615.00px;font-size:12px;line-height:14px;letter-spacing:0.115px;">Each</span>
<span class="t" style="left:244.4px;top:615.00px;font-size:12px;line-height:14px;letter-spacing:0.337px;">5508-42</span>
<svg style="position:absolute;left:468px;top:609px" width="20" height="20" viewBox="0 0 20 20"><defs><radialGradient id="lg14" cx="40%" cy="35%" r="70%"><stop offset="0" stop-color="#fff"/><stop offset=".6" stop-color="#e6e6e6"/><stop offset="1" stop-color="#bdbdbd"/></radialGradient></defs><path d="M8.6 11.6 L2.2 18.2" stroke="#6a6a6a" stroke-width="2.4" stroke-linecap="round"/><path d="M9.2 11.2 L3 17.6" stroke="#9a9a9a" stroke-width="1"/><circle cx="12.6" cy="7" r="5.6" fill="url(#lg14)" stroke="#8c8c8c" stroke-width="1.5"/><circle cx="12.6" cy="7" r="3.2" fill="none" stroke="#c9c9c9" stroke-width="1"/></svg>
<span class="t" style="left:393px;top:617.00px;font-size:12px;line-height:14px;letter-spacing:-0.297px;">FL</span>
<span class="t" style="left:503.4px;top:615.00px;font-size:12px;line-height:14px;width:131.5px;overflow:hidden;letter-spacing:0.379px;">FLSA182-F3043/4In3</span>
<span class="t" style="left:655.2px;top:615.00px;font-size:12px;line-height:14px;width:47.6px;overflow:hidden;letter-spacing:0.1px;">SA182-F</span>
<span class="t" style="left:789.9px;top:615.00px;font-size:12px;line-height:14px;letter-spacing:-0.133px;">3.0000</span>
<span class="t" style="left:864.2px;top:615.00px;font-size:12px;line-height:14px;letter-spacing:-0.133px;">1.0000</span>
<div style="left:1089px;top:611px;width:35px;height:20px;background:#ccccff;border:1px solid #4062c4;border-right-color:#2c4cac;border-bottom-color:#2c4cac;box-sizing:border-box;"></div>
<span class="t" style="left:1094.8px;top:615.00px;font-size:12px;line-height:14px;font-weight:bold;letter-spacing:-0.956px;">Add</span>
<span class="t" style="left:1240.6px;top:615.00px;font-size:12px;line-height:14px;letter-spacing:-0.012px;">0046</span>
<div style="left:14px;top:635px;width:1116px;height:1px;background:#e9e9e9;"></div>
<div style="left:1237px;top:635px;width:160px;height:1px;background:#e9e9e9;"></div>
<div style="left:1431px;top:635px;width:139px;height:1px;background:#e9e9e9;"></div>
<div style="left:21px;top:642px;width:13px;height:13px;background:linear-gradient(135deg,#dcdcd7,#f3f3ef 55%,#ffffff);border:1px solid #2c4a60;box-sizing:border-box;"></div>
<span class="t" style="left:64.5px;top:643.00px;font-size:12px;line-height:14px;letter-spacing:0.088px;">0043</span>
<div style="left:127px;top:640px;width:51px;height:18px;background:#fff;border:1px solid #f0f0f0;border-top-color:#6f6f6f;border-left-color:#6f6f6f;box-sizing:border-box;overflow:hidden;"></div>
<div style="left:188px;top:640px;width:44px;height:18px;background:#fff;border:1px solid #f0f0f0;border-top-color:#6f6f6f;border-left-color:#6f6f6f;box-sizing:border-box;overflow:hidden;"></div>
<div style="left:242px;top:640px;width:104px;height:18px;background:#fff;border:1px solid #f0f0f0;border-top-color:#6f6f6f;border-left-color:#6f6f6f;box-sizing:border-box;overflow:hidden;"></div>
<div style="left:501px;top:640px;width:135px;height:18px;background:#fff;border:1px solid #f0f0f0;border-top-color:#6f6f6f;border-left-color:#6f6f6f;box-sizing:border-box;overflow:hidden;"></div>
<div style="left:653px;top:640px;width:51px;height:18px;background:#fff;border:1px solid #f0f0f0;border-top-color:#6f6f6f;border-left-color:#6f6f6f;box-sizing:border-box;overflow:hidden;"></div>
<div style="left:713px;top:640px;width:64px;height:18px;background:#fff;border:1px solid #f0f0f0;border-top-color:#6f6f6f;border-left-color:#6f6f6f;box-sizing:border-box;overflow:hidden;"></div>
<div style="left:787px;top:640px;width:62px;height:18px;background:#fff;border:1px solid #f0f0f0;border-top-color:#6f6f6f;border-left-color:#6f6f6f;box-sizing:border-box;overflow:hidden;"></div>
<div style="left:861px;top:640px;width:62px;height:18px;background:#fff;border:1px solid #f0f0f0;border-top-color:#6f6f6f;border-left-color:#6f6f6f;box-sizing:border-box;overflow:hidden;"></div>
<div style="left:935px;top:640px;width:68px;height:18px;background:#fff;border:1px solid #f0f0f0;border-top-color:#6f6f6f;border-left-color:#6f6f6f;box-sizing:border-box;overflow:hidden;"></div>
<div style="left:1015px;top:640px;width:63px;height:18px;background:#fff;border:1px solid #f0f0f0;border-top-color:#6f6f6f;border-left-color:#6f6f6f;box-sizing:border-box;overflow:hidden;"></div>
<div style="left:1325px;top:640px;width:62px;height:18px;background:#fff;border:1px solid #f0f0f0;border-top-color:#6f6f6f;border-left-color:#6f6f6f;box-sizing:border-box;overflow:hidden;"></div>
<div style="left:1433px;top:640px;width:135px;height:18px;background:#fff;border:1px solid #f0f0f0;border-top-color:#6f6f6f;border-left-color:#6f6f6f;box-sizing:border-box;overflow:hidden;"></div>
<div style="left:390px;top:641px;width:74px;height:19px;background:#fff;border:1px solid #f0f0f0;border-top-color:#6f6f6f;border-left-color:#6f6f6f;box-sizing:border-box;overflow:hidden;"></div>
<span class="t" style="left:130.4px;top:643.00px;font-size:12px;line-height:14px;letter-spacing:-0.255px;">1.00</span>
<span class="t" style="left:190.6px;top:643.00px;font-size:12px;line-height:14px;letter-spacing:0.115px;">Each</span>
<span class="t" style="left:244.4px;top:643.00px;font-size:12px;line-height:14px;letter-spacing:0.337px;">5508-43</span>
<svg style="position:absolute;left:468px;top:637px" width="20" height="20" viewBox="0 0 20 20"><defs><radialGradient id="lg15" cx="40%" cy="35%" r="70%"><stop offset="0" stop-color="#fff"/><stop offset=".6" stop-color="#e6e6e6"/><stop offset="1" stop-color="#bdbdbd"/></radialGradient></defs><path d="M8.6 11.6 L2.2 18.2" stroke="#6a6a6a" stroke-width="2.4" stroke-linecap="round"/><path d="M9.2 11.2 L3 17.6" stroke="#9a9a9a" stroke-width="1"/><circle cx="12.6" cy="7" r="5.6" fill="url(#lg15)" stroke="#8c8c8c" stroke-width="1.5"/><circle cx="12.6" cy="7" r="3.2" fill="none" stroke="#c9c9c9" stroke-width="1"/></svg>
<span class="t" style="left:393px;top:645.00px;font-size:12px;line-height:14px;letter-spacing:-0.297px;">FL</span>
<span class="t" style="left:503.4px;top:643.00px;font-size:12px;line-height:14px;width:131.5px;overflow:hidden;letter-spacing:0.379px;">FLSA182-F3043/4In3</span>
<span class="t" style="left:655.2px;top:643.00px;font-size:12px;line-height:14px;width:47.6px;overflow:hidden;letter-spacing:0.1px;">SA182-F</span>
<span class="t" style="left:789.9px;top:643.00px;font-size:12px;line-height:14px;letter-spacing:-0.133px;">3.0000</span>
<span class="t" style="left:864.2px;top:643.00px;font-size:12px;line-height:14px;letter-spacing:-0.133px;">1.0000</span>
<div style="left:1089px;top:639px;width:35px;height:20px;background:#ccccff;border:1px solid #4062c4;border-right-color:#2c4cac;border-bottom-color:#2c4cac;box-sizing:border-box;"></div>
<span class="t" style="left:1094.8px;top:643.00px;font-size:12px;line-height:14px;font-weight:bold;letter-spacing:-0.956px;">Add</span>
<span class="t" style="left:1240.6px;top:643.00px;font-size:12px;line-height:14px;letter-spacing:-0.012px;">0046</span>
<div style="left:14px;top:662px;width:1116px;height:1px;background:#e9e9e9;"></div>
<div style="left:1237px;top:662px;width:160px;height:1px;background:#e9e9e9;"></div>
<div style="left:1431px;top:662px;width:139px;height:1px;background:#e9e9e9;"></div>
<div style="left:21px;top:669px;width:13px;height:13px;background:linear-gradient(135deg,#dcdcd7,#f3f3ef 55%,#ffffff);border:1px solid #2c4a60;box-sizing:border-box;"></div>
<span class="t" style="left:64.5px;top:670.00px;font-size:12px;line-height:14px;letter-spacing:0.088px;">0044</span>
<div style="left:127px;top:667px;width:51px;height:18px;background:#fff;border:1px solid #f0f0f0;border-top-color:#6f6f6f;border-left-color:#6f6f6f;box-sizing:border-box;overflow:hidden;"></div>
<div style="left:188px;top:667px;width:44px;height:18px;background:#fff;border:1px solid #f0f0f0;border-top-color:#6f6f6f;border-left-color:#6f6f6f;box-sizing:border-box;overflow:hidden;"></div>
<div style="left:242px;top:667px;width:104px;height:18px;background:#fff;border:1px solid #f0f0f0;border-top-color:#6f6f6f;border-left-color:#6f6f6f;box-sizing:border-box;overflow:hidden;"></div>
<div style="left:501px;top:667px;width:135px;height:18px;background:#fff;border:1px solid #f0f0f0;border-top-color:#6f6f6f;border-left-color:#6f6f6f;box-sizing:border-box;overflow:hidden;"></div>
<div style="left:653px;top:667px;width:51px;height:18px;background:#fff;border:1px solid #f0f0f0;border-top-color:#6f6f6f;border-left-color:#6f6f6f;box-sizing:border-box;overflow:hidden;"></div>
<div style="left:713px;top:667px;width:64px;height:18px;background:#fff;border:1px solid #f0f0f0;border-top-color:#6f6f6f;border-left-color:#6f6f6f;box-sizing:border-box;overflow:hidden;"></div>
<div style="left:787px;top:667px;width:62px;height:18px;background:#fff;border:1px solid #f0f0f0;border-top-color:#6f6f6f;border-left-color:#6f6f6f;box-sizing:border-box;overflow:hidden;"></div>
<div style="left:861px;top:667px;width:62px;height:18px;background:#fff;border:1px solid #f0f0f0;border-top-color:#6f6f6f;border-left-color:#6f6f6f;box-sizing:border-box;overflow:hidden;"></div>
<div style="left:935px;top:667px;width:68px;height:18px;background:#fff;border:1px solid #f0f0f0;border-top-color:#6f6f6f;border-left-color:#6f6f6f;box-sizing:border-box;overflow:hidden;"></div>
<div style="left:1015px;top:667px;width:63px;height:18px;background:#fff;border:1px solid #f0f0f0;border-top-color:#6f6f6f;border-left-color:#6f6f6f;box-sizing:border-box;overflow:hidden;"></div>
<div style="left:1325px;top:667px;width:62px;height:18px;background:#fff;border:1px solid #f0f0f0;border-top-color:#6f6f6f;border-left-color:#6f6f6f;box-sizing:border-box;overflow:hidden;"></div>
<div style="left:1433px;top:667px;width:135px;height:18px;background:#fff;border:1px solid #f0f0f0;border-top-color:#6f6f6f;border-left-color:#6f6f6f;box-sizing:border-box;overflow:hidden;"></div>
<div style="left:390px;top:668px;width:74px;height:19px;background:#fff;border:1px solid #f0f0f0;border-top-color:#6f6f6f;border-left-color:#6f6f6f;box-sizing:border-box;overflow:hidden;"></div>
<span class="t" style="left:130.4px;top:670.00px;font-size:12px;line-height:14px;letter-spacing:-0.255px;">1.00</span>
<span class="t" style="left:190.6px;top:670.00px;font-size:12px;line-height:14px;letter-spacing:0.115px;">Each</span>
<span class="t" style="left:244.4px;top:670.00px;font-size:12px;line-height:14px;letter-spacing:0.337px;">5508-44</span>
<svg style="position:absolute;left:468px;top:664px" width="20" height="20" viewBox="0 0 20 20"><defs><radialGradient id="lg16" cx="40%" cy="35%" r="70%"><stop offset="0" stop-color="#fff"/><stop offset=".6" stop-color="#e6e6e6"/><stop offset="1" stop-color="#bdbdbd"/></radialGradient></defs><path d="M8.6 11.6 L2.2 18.2" stroke="#6a6a6a" stroke-width="2.4" stroke-linecap="round"/><path d="M9.2 11.2 L3 17.6" stroke="#9a9a9a" stroke-width="1"/><circle cx="12.6" cy="7" r="5.6" fill="url(#lg16)" stroke="#8c8c8c" stroke-width="1.5"/><circle cx="12.6" cy="7" r="3.2" fill="none" stroke="#c9c9c9" stroke-width="1"/></svg>
<span class="t" style="left:393px;top:672.00px;font-size:12px;line-height:14px;letter-spacing:-0.297px;">FL</span>
<span class="t" style="left:503.4px;top:670.00px;font-size:12px;line-height:14px;width:131.5px;overflow:hidden;letter-spacing:0.379px;">FLSA182-F3043/4In3</span>
<span class="t" style="left:655.2px;top:670.00px;font-size:12px;line-height:14px;width:47.6px;overflow:hidden;letter-spacing:0.1px;">SA182-F</span>
<span class="t" style="left:789.9px;top:670.00px;font-size:12px;line-height:14px;letter-spacing:-0.133px;">3.0000</span>
<span class="t" style="left:864.2px;top:670.00px;font-size:12px;line-height:14px;letter-spacing:-0.133px;">1.0000</span>
<div style="left:1089px;top:666px;width:35px;height:20px;background:#ccccff;border:1px solid #4062c4;border-right-color:#2c4cac;border-bottom-color:#2c4cac;box-sizing:border-box;"></div>
<span class="t" style="left:1094.8px;top:670.00px;font-size:12px;line-height:14px;font-weight:bold;letter-spacing:-0.956px;">Add</span>
<span class="t" style="left:1240.6px;top:670.00px;font-size:12px;line-height:14px;letter-spacing:-0.012px;">0046</span>
<div style="left:14px;top:689px;width:1116px;height:1px;background:#e9e9e9;"></div>
<div style="left:1237px;top:689px;width:160px;height:1px;background:#e9e9e9;"></div>
<div style="left:1431px;top:689px;width:139px;height:1px;background:#e9e9e9;"></div>
<div style="left:21px;top:696px;width:13px;height:13px;background:linear-gradient(135deg,#dcdcd7,#f3f3ef 55%,#ffffff);border:1px solid #2c4a60;box-sizing:border-box;"></div>
<span class="t" style="left:64.5px;top:697.00px;font-size:12px;line-height:14px;letter-spacing:0.088px;">0045</span>
<div style="left:127px;top:694px;width:51px;height:18px;background:#fff;border:1px solid #f0f0f0;border-top-color:#6f6f6f;border-left-color:#6f6f6f;box-sizing:border-box;overflow:hidden;"></div>
<div style="left:188px;top:694px;width:44px;height:18px;background:#fff;border:1px solid #f0f0f0;border-top-color:#6f6f6f;border-left-color:#6f6f6f;box-sizing:border-box;overflow:hidden;"></div>
<div style="left:242px;top:694px;width:104px;height:18px;background:#fff;border:1px solid #f0f0f0;border-top-color:#6f6f6f;border-left-color:#6f6f6f;box-sizing:border-box;overflow:hidden;"></div>
<div style="left:501px;top:694px;width:135px;height:18px;background:#fff;border:1px solid #f0f0f0;border-top-color:#6f6f6f;border-left-color:#6f6f6f;box-sizing:border-box;overflow:hidden;"></div>
<div style="left:653px;top:694px;width:51px;height:18px;background:#fff;border:1px solid #f0f0f0;border-top-color:#6f6f6f;border-left-color:#6f6f6f;box-sizing:border-box;overflow:hidden;"></div>
<div style="left:713px;top:694px;width:64px;height:18px;background:#fff;border:1px solid #f0f0f0;border-top-color:#6f6f6f;border-left-color:#6f6f6f;box-sizing:border-box;overflow:hidden;"></div>
<div style="left:787px;top:694px;width:62px;height:18px;background:#fff;border:1px solid #f0f0f0;border-top-color:#6f6f6f;border-left-color:#6f6f6f;box-sizing:border-box;overflow:hidden;"></div>
<div style="left:861px;top:694px;width:62px;height:18px;background:#fff;border:1px solid #f0f0f0;border-top-color:#6f6f6f;border-left-color:#6f6f6f;box-sizing:border-box;overflow:hidden;"></div>
<div style="left:935px;top:694px;width:68px;height:18px;background:#fff;border:1px solid #f0f0f0;border-top-color:#6f6f6f;border-left-color:#6f6f6f;box-sizing:border-box;overflow:hidden;"></div>
<div style="left:1015px;top:694px;width:63px;height:18px;background:#fff;border:1px solid #f0f0f0;border-top-color:#6f6f6f;border-left-color:#6f6f6f;box-sizing:border-box;overflow:hidden;"></div>
<div style="left:1325px;top:694px;width:62px;height:18px;background:#fff;border:1px solid #f0f0f0;border-top-color:#6f6f6f;border-left-color:#6f6f6f;box-sizing:border-box;overflow:hidden;"></div>
<div style="left:1433px;top:694px;width:135px;height:18px;background:#fff;border:1px solid #f0f0f0;border-top-color:#6f6f6f;border-left-color:#6f6f6f;box-sizing:border-box;overflow:hidden;"></div>
<div style="left:390px;top:695px;width:74px;height:19px;background:#fff;border:1px solid #f0f0f0;border-top-color:#6f6f6f;border-left-color:#6f6f6f;box-sizing:border-box;overflow:hidden;"></div>
<span class="t" style="left:130.4px;top:697.00px;font-size:12px;line-height:14px;letter-spacing:-0.255px;">1.00</span>
<span class="t" style="left:190.6px;top:697.00px;font-size:12px;line-height:14px;letter-spacing:0.115px;">Each</span>
<span class="t" style="left:244.4px;top:697.00px;font-size:12px;line-height:14px;letter-spacing:0.337px;">5508-45</span>
<svg style="position:absolute;left:468px;top:691px" width="20" height="20" viewBox="0 0 20 20"><defs><radialGradient id="lg17" cx="40%" cy="35%" r="70%"><stop offset="0" stop-color="#fff"/><stop offset=".6" stop-color="#e6e6e6"/><stop offset="1" stop-color="#bdbdbd"/></radialGradient></defs><path d="M8.6 11.6 L2.2 18.2" stroke="#6a6a6a" stroke-width="2.4" stroke-linecap="round"/><path d="M9.2 11.2 L3 17.6" stroke="#9a9a9a" stroke-width="1"/><circle cx="12.6" cy="7" r="5.6" fill="url(#lg17)" stroke="#8c8c8c" stroke-width="1.5"/><circle cx="12.6" cy="7" r="3.2" fill="none" stroke="#c9c9c9" stroke-width="1"/></svg>
<span class="t" style="left:393px;top:699.00px;font-size:12px;line-height:14px;letter-spacing:-0.297px;">FL</span>
<span class="t" style="left:503.4px;top:697.00px;font-size:12px;line-height:14px;width:131.5px;overflow:hidden;letter-spacing:0.379px;">FLSA182-F3043/4In3</span>
<span class="t" style="left:655.2px;top:697.00px;font-size:12px;line-height:14px;width:47.6px;overflow:hidden;letter-spacing:0.1px;">SA182-F</span>
<span class="t" style="left:789.9px;top:697.00px;font-size:12px;line-height:14px;letter-spacing:-0.133px;">3.0000</span>
<span class="t" style="left:864.2px;top:697.00px;font-size:12px;line-height:14px;letter-spacing:-0.133px;">1.0000</span>
<div style="left:1089px;top:693px;width:35px;height:20px;background:#ccccff;border:1px solid #4062c4;border-right-color:#2c4cac;border-bottom-color:#2c4cac;box-sizing:border-box;"></div>
<span class="t" style="left:1094.8px;top:697.00px;font-size:12px;line-height:14px;font-weight:bold;letter-spacing:-0.956px;">Add</span>
<span class="t" style="left:1240.6px;top:697.00px;font-size:12px;line-height:14px;letter-spacing:-0.012px;">0046</span>
<div style="left:14px;top:717px;width:1183px;height:1px;background:#e9e9e9;"></div>
<div style="left:1237px;top:717px;width:160px;height:1px;background:#e9e9e9;"></div>
<div style="left:1431px;top:717px;width:139px;height:1px;background:#e9e9e9;"></div>
<div style="left:21px;top:724px;width:13px;height:13px;background:linear-gradient(135deg,#dcdcd7,#f3f3ef 55%,#ffffff);border:1px solid #2c4a60;box-sizing:border-box;"></div>
<span class="t" style="left:64.5px;top:725.00px;font-size:12px;line-height:14px;letter-spacing:0.088px;">0046</span>
<div style="left:127px;top:722px;width:51px;height:18px;background:#fff;border:1px solid #f0f0f0;border-top-color:#6f6f6f;border-left-color:#6f6f6f;box-sizing:border-box;overflow:hidden;"></div>
<div style="left:188px;top:722px;width:44px;height:18px;background:#fff;border:1px solid #f0f0f0;border-top-color:#6f6f6f;border-left-color:#6f6f6f;box-sizing:border-box;overflow:hidden;"></div>
<div style="left:242px;top:722px;width:104px;height:18px;background:#fff;border:1px solid #f0f0f0;border-top-color:#6f6f6f;border-left-color:#6f6f6f;box-sizing:border-box;overflow:hidden;"></div>
<div style="left:501px;top:722px;width:135px;height:18px;background:#fff;border:1px solid #f0f0f0;border-top-color:#6f6f6f;border-left-color:#6f6f6f;box-sizing:border-box;overflow:hidden;"></div>
<div style="left:653px;top:722px;width:51px;height:18px;background:#fff;border:1px solid #f0f0f0;border-top-color:#6f6f6f;border-left-color:#6f6f6f;box-sizing:border-box;overflow:hidden;"></div>
<div style="left:713px;top:722px;width:64px;height:18px;background:#fff;border:1px solid #f0f0f0;border-top-color:#6f6f6f;border-left-color:#6f6f6f;box-sizing:border-box;overflow:hidden;"></div>
<div style="left:787px;top:722px;width:62px;height:18px;background:#fff;border:1px solid #f0f0f0;border-top-color:#6f6f6f;border-left-color:#6f6f6f;box-sizing:border-box;overflow:hidden;"></div>
<div style="left:861px;top:722px;width:62px;height:18px;background:#fff;border:1px solid #f0f0f0;border-top-color:#6f6f6f;border-left-color:#6f6f6f;box-sizing:border-box;overflow:hidden;"></div>
<div style="left:935px;top:722px;width:68px;height:18px;background:#fff;border:1px solid #f0f0f0;border-top-color:#6f6f6f;border-left-color:#6f6f6f;box-sizing:border-box;overflow:hidden;"></div>
<div style="left:1015px;top:722px;width:63px;height:18px;background:#fff;border:1px solid #f0f0f0;border-top-color:#6f6f6f;border-left-color:#6f6f6f;box-sizing:border-box;overflow:hidden;"></div>
<div style="left:1325px;top:722px;width:62px;height:18px;background:#fff;border:1px solid #f0f0f0;border-top-color:#6f6f6f;border-left-color:#6f6f6f;box-sizing:border-box;overflow:hidden;"></div>
<div style="left:1433px;top:722px;width:135px;height:18px;background:#fff;border:1px solid #f0f0f0;border-top-color:#6f6f6f;border-left-color:#6f6f6f;box-sizing:border-box;overflow:hidden;"></div>
<div style="left:390px;top:723px;width:74px;height:19px;background:#fff;border:1px solid #f0f0f0;border-top-color:#6f6f6f;border-left-color:#6f6f6f;box-sizing:border-box;overflow:hidden;"></div>
<span class="t" style="left:130.4px;top:725.00px;font-size:12px;line-height:14px;letter-spacing:-0.255px;">1.00</span>
<span class="t" style="left:190.6px;top:725.00px;font-size:12px;line-height:14px;letter-spacing:0.115px;">Each</span>
<span class="t" style="left:244.4px;top:725.00px;font-size:12px;line-height:14px;letter-spacing:0.337px;">5508-46</span>
<svg style="position:absolute;left:468px;top:719px" width="20" height="20" viewBox="0 0 20 20"><defs><radialGradient id="lg18" cx="40%" cy="35%" r="70%"><stop offset="0" stop-color="#fff"/><stop offset=".6" stop-color="#e6e6e6"/><stop offset="1" stop-color="#bdbdbd"/></radialGradient></defs><path d="M8.6 11.6 L2.2 18.2" stroke="#6a6a6a" stroke-width="2.4" stroke-linecap="round"/><path d="M9.2 11.2 L3 17.6" stroke="#9a9a9a" stroke-width="1"/><circle cx="12.6" cy="7" r="5.6" fill="url(#lg18)" stroke="#8c8c8c" stroke-width="1.5"/><circle cx="12.6" cy="7" r="3.2" fill="none" stroke="#c9c9c9" stroke-width="1"/></svg>
<span class="t" style="left:503.4px;top:725.00px;font-size:12px;line-height:14px;">Nested FL</span>
<span class="t" style="left:715.9px;top:725.00px;font-size:12px;line-height:14px;letter-spacing:-0.089px;">12.0000</span>
<span class="t" style="left:789.9px;top:725.00px;font-size:12px;line-height:14px;letter-spacing:-0.089px;">33.0000</span>
<svg style="position:absolute;left:1088px;top:721px" width="20" height="20" viewBox="0 0 20 20"><defs><radialGradient id="lg19" cx="40%" cy="35%" r="70%"><stop offset="0" stop-color="#fff"/><stop offset=".6" stop-color="#e6e6e6"/><stop offset="1" stop-color="#bdbdbd"/></radialGradient></defs><path d="M8.6 11.6 L2.2 18.2" stroke="#6a6a6a" stroke-width="2.4" stroke-linecap="round"/><path d="M9.2 11.2 L3 17.6" stroke="#9a9a9a" stroke-width="1"/><circle cx="12.6" cy="7" r="5.6" fill="url(#lg19)" stroke="#8c8c8c" stroke-width="1.5"/><circle cx="12.6" cy="7" r="3.2" fill="none" stroke="#c9c9c9" stroke-width="1"/></svg>
<div style="left:1132px;top:721px;width:36px;height:20px;background:#d2e4f8;border:1px solid #5a86c0;border-right-color:#39649e;border-bottom-color:#39649e;box-sizing:border-box;"></div>
<span class="t" style="left:1139px;top:725.00px;font-size:12px;line-height:14px;font-weight:bold;letter-spacing:-1.323px;">Add</span>
<span class="t" style="left:1240.4px;top:725.00px;font-size:12px;line-height:14px;color:#1a1a8c;text-decoration:underline;text-decoration-skip-ink:none;letter-spacing:0.297px;">[P]</span>
<div style="left:14px;top:744px;width:1183px;height:1px;background:#e9e9e9;"></div>
<div style="left:1237px;top:744px;width:160px;height:1px;background:#e9e9e9;"></div>
<div style="left:1431px;top:744px;width:139px;height:1px;background:#e9e9e9;"></div>
<div style="left:21px;top:751px;width:13px;height:13px;background:linear-gradient(135deg,#dcdcd7,#f3f3ef 55%,#ffffff);border:1px solid #2c4a60;box-sizing:border-box;"></div>
<span class="t" style="left:64.5px;top:752.00px;font-size:12px;line-height:14px;letter-spacing:0.088px;">0047</span>
<div style="left:127px;top:749px;width:51px;height:18px;background:#fff;border:1px solid #f0f0f0;border-top-color:#6f6f6f;border-left-color:#6f6f6f;box-sizing:border-box;overflow:hidden;"></div>
<div style="left:188px;top:749px;width:44px;height:18px;background:#fff;border:1px solid #f0f0f0;border-top-color:#6f6f6f;border-left-color:#6f6f6f;box-sizing:border-box;overflow:hidden;"></div>
<div style="left:242px;top:749px;width:104px;height:18px;background:#fff;border:1px solid #f0f0f0;border-top-color:#6f6f6f;border-left-color:#6f6f6f;box-sizing:border-box;overflow:hidden;"></div>
<div style="left:501px;top:749px;width:135px;height:18px;background:#fff;border:1px solid #f0f0f0;border-top-color:#6f6f6f;border-left-color:#6f6f6f;box-sizing:border-box;overflow:hidden;"></div>
<div style="left:653px;top:749px;width:51px;height:18px;background:#fff;border:1px solid #f0f0f0;border-top-color:#6f6f6f;border-left-color:#6f6f6f;box-sizing:border-box;overflow:hidden;"></div>
<div style="left:713px;top:749px;width:64px;height:18px;background:#fff;border:1px solid #f0f0f0;border-top-color:#6f6f6f;border-left-color:#6f6f6f;box-sizing:border-box;overflow:hidden;"></div>
<div style="left:787px;top:749px;width:62px;height:18px;background:#fff;border:1px solid #f0f0f0;border-top-color:#6f6f6f;border-left-color:#6f6f6f;box-sizing:border-box;overflow:hidden;"></div>
<div style="left:861px;top:749px;width:62px;height:18px;background:#fff;border:1px solid #f0f0f0;border-top-color:#6f6f6f;border-left-color:#6f6f6f;box-sizing:border-box;overflow:hidden;"></div>
<div style="left:935px;top:749px;width:68px;height:18px;background:#fff;border:1px solid #f0f0f0;border-top-color:#6f6f6f;border-left-color:#6f6f6f;box-sizing:border-box;overflow:hidden;"></div>
<div style="left:1015px;top:749px;width:63px;height:18px;background:#fff;border:1px solid #f0f0f0;border-top-color:#6f6f6f;border-left-color:#6f6f6f;box-sizing:border-box;overflow:hidden;"></div>
<div style="left:1325px;top:749px;width:62px;height:18px;background:#fff;border:1px solid #f0f0f0;border-top-color:#6f6f6f;border-left-color:#6f6f6f;box-sizing:border-box;overflow:hidden;"></div>
<div style="left:1433px;top:749px;width:135px;height:18px;background:#fff;border:1px solid #f0f0f0;border-top-color:#6f6f6f;border-left-color:#6f6f6f;box-sizing:border-box;overflow:hidden;"></div>
<div style="left:390px;top:750px;width:74px;height:19px;background:#fff;border:1px solid #f0f0f0;border-top-color:#6f6f6f;border-left-color:#6f6f6f;box-sizing:border-box;overflow:hidden;"></div>
<span class="t" style="left:130.4px;top:752.00px;font-size:12px;line-height:14px;letter-spacing:-0.255px;">1.00</span>
<span class="t" style="left:190.6px;top:752.00px;font-size:12px;line-height:14px;letter-spacing:0.115px;">Each</span>
<span class="t" style="left:244.4px;top:752.00px;font-size:12px;line-height:14px;letter-spacing:0.337px;">5508-47</span>
<svg style="position:absolute;left:468px;top:746px" width="20" height="20" viewBox="0 0 20 20"><defs><radialGradient id="lg20" cx="40%" cy="35%" r="70%"><stop offset="0" stop-color="#fff"/><stop offset=".6" stop-color="#e6e6e6"/><stop offset="1" stop-color="#bdbdbd"/></radialGradient></defs><path d="M8.6 11.6 L2.2 18.2" stroke="#6a6a6a" stroke-width="2.4" stroke-linecap="round"/><path d="M9.2 11.2 L3 17.6" stroke="#9a9a9a" stroke-width="1"/><circle cx="12.6" cy="7" r="5.6" fill="url(#lg20)" stroke="#8c8c8c" stroke-width="1.5"/><circle cx="12.6" cy="7" r="3.2" fill="none" stroke="#c9c9c9" stroke-width="1"/></svg>
<span class="t" style="left:503.4px;top:752.00px;font-size:12px;line-height:14px;">Nested EL</span>
<span class="t" style="left:715.9px;top:752.00px;font-size:12px;line-height:14px;letter-spacing:-0.089px;">12.0000</span>
<span class="t" style="left:789.9px;top:752.00px;font-size:12px;line-height:14px;letter-spacing:-0.089px;">35.0000</span>
<svg style="position:absolute;left:1088px;top:748px" width="20" height="20" viewBox="0 0 20 20"><defs><radialGradient id="lg21" cx="40%" cy="35%" r="70%"><stop offset="0" stop-color="#fff"/><stop offset=".6" stop-color="#e6e6e6"/><stop offset="1" stop-color="#bdbdbd"/></radialGradient></defs><path d="M8.6 11.6 L2.2 18.2" stroke="#6a6a6a" stroke-width="2.4" stroke-linecap="round"/><path d="M9.2 11.2 L3 17.6" stroke="#9a9a9a" stroke-width="1"/><circle cx="12.6" cy="7" r="5.6" fill="url(#lg21)" stroke="#8c8c8c" stroke-width="1.5"/><circle cx="12.6" cy="7" r="3.2" fill="none" stroke="#c9c9c9" stroke-width="1"/></svg>
<div style="left:1132px;top:748px;width:36px;height:20px;background:#d2e4f8;border:1px solid #5a86c0;border-right-color:#39649e;border-bottom-color:#39649e;box-sizing:border-box;"></div>
<span class="t" style="left:1139px;top:752.00px;font-size:12px;line-height:14px;font-weight:bold;letter-spacing:-1.323px;">Add</span>
<span class="t" style="left:1240.4px;top:752.00px;font-size:12px;line-height:14px;color:#1a1a8c;text-decoration:underline;text-decoration-skip-ink:none;letter-spacing:0.297px;">[P]</span>
<div style="left:14px;top:771px;width:1183px;height:1px;background:#e9e9e9;"></div>
<div style="left:1237px;top:771px;width:160px;height:1px;background:#e9e9e9;"></div>
<div style="left:1431px;top:771px;width:139px;height:1px;background:#e9e9e9;"></div>
<div style="left:21px;top:778px;width:13px;height:13px;background:linear-gradient(135deg,#dcdcd7,#f3f3ef 55%,#ffffff);border:1px solid #2c4a60;box-sizing:border-box;"></div>
<span class="t" style="left:64.5px;top:779.00px;font-size:12px;line-height:14px;letter-spacing:0.088px;">0048</span>
<div style="left:127px;top:776px;width:51px;height:18px;background:#fff;border:1px solid #f0f0f0;border-top-color:#6f6f6f;border-left-color:#6f6f6f;box-sizing:border-box;overflow:hidden;"></div>
<div style="left:188px;top:776px;width:44px;height:18px;background:#fff;border:1px solid #f0f0f0;border-top-color:#6f6f6f;border-left-color:#6f6f6f;box-sizing:border-box;overflow:hidden;"></div>
<div style="left:242px;top:776px;width:104px;height:18px;background:#fff;border:1px solid #f0f0f0;border-top-color:#6f6f6f;border-left-color:#6f6f6f;box-sizing:border-box;overflow:hidden;"></div>
<div style="left:501px;top:776px;width:135px;height:18px;background:#fff;border:1px solid #f0f0f0;border-top-color:#6f6f6f;border-left-color:#6f6f6f;box-sizing:border-box;overflow:hidden;"></div>
<div style="left:653px;top:776px;width:51px;height:18px;background:#fff;border:1px solid #f0f0f0;border-top-color:#6f6f6f;border-left-color:#6f6f6f;box-sizing:border-box;overflow:hidden;"></div>
<div style="left:713px;top:776px;width:64px;height:18px;background:#fff;border:1px solid #f0f0f0;border-top-color:#6f6f6f;border-left-color:#6f6f6f;box-sizing:border-box;overflow:hidden;"></div>
<div style="left:787px;top:776px;width:62px;height:18px;background:#fff;border:1px solid #f0f0f0;border-top-color:#6f6f6f;border-left-color:#6f6f6f;box-sizing:border-box;overflow:hidden;"></div>
<div style="left:861px;top:776px;width:62px;height:18px;background:#fff;border:1px solid #f0f0f0;border-top-color:#6f6f6f;border-left-color:#6f6f6f;box-sizing:border-box;overflow:hidden;"></div>
<div style="left:935px;top:776px;width:68px;height:18px;background:#fff;border:1px solid #f0f0f0;border-top-color:#6f6f6f;border-left-color:#6f6f6f;box-sizing:border-box;overflow:hidden;"></div>
<div style="left:1015px;top:776px;width:63px;height:18px;background:#fff;border:1px solid #f0f0f0;border-top-color:#6f6f6f;border-left-color:#6f6f6f;box-sizing:border-box;overflow:hidden;"></div>
<div style="left:1325px;top:776px;width:62px;height:18px;background:#fff;border:1px solid #f0f0f0;border-top-color:#6f6f6f;border-left-color:#6f6f6f;box-sizing:border-box;overflow:hidden;"></div>
<div style="left:1433px;top:776px;width:135px;height:18px;background:#fff;border:1px solid #f0f0f0;border-top-color:#6f6f6f;border-left-color:#6f6f6f;box-sizing:border-box;overflow:hidden;"></div>
<div style="left:390px;top:777px;width:74px;height:19px;background:#fff;border:1px solid #f0f0f0;border-top-color:#6f6f6f;border-left-color:#6f6f6f;box-sizing:border-box;overflow:hidden;"></div>
<span class="t" style="left:130.4px;top:779.00px;font-size:12px;line-height:14px;letter-spacing:-0.255px;">1.00</span>
<span class="t" style="left:190.6px;top:779.00px;font-size:12px;line-height:14px;letter-spacing:0.115px;">Each</span>
<span class="t" style="left:244.4px;top:779.00px;font-size:12px;line-height:14px;letter-spacing:0.337px;">5508-48</span>
<svg style="position:absolute;left:468px;top:773px" width="20" height="20" viewBox="0 0 20 20"><defs><radialGradient id="lg22" cx="40%" cy="35%" r="70%"><stop offset="0" stop-color="#fff"/><stop offset=".6" stop-color="#e6e6e6"/><stop offset="1" stop-color="#bdbdbd"/></radialGradient></defs><path d="M8.6 11.6 L2.2 18.2" stroke="#6a6a6a" stroke-width="2.4" stroke-linecap="round"/><path d="M9.2 11.2 L3 17.6" stroke="#9a9a9a" stroke-width="1"/><circle cx="12.6" cy="7" r="5.6" fill="url(#lg22)" stroke="#8c8c8c" stroke-width="1.5"/><circle cx="12.6" cy="7" r="3.2" fill="none" stroke="#c9c9c9" stroke-width="1"/></svg>
<span class="t" style="left:503.4px;top:779.00px;font-size:12px;line-height:14px;">Nested EL3</span>
<span class="t" style="left:715.9px;top:779.00px;font-size:12px;line-height:14px;letter-spacing:-0.089px;">12.0000</span>
<span class="t" style="left:789.9px;top:779.00px;font-size:12px;line-height:14px;letter-spacing:-0.089px;">55.0000</span>
<svg style="position:absolute;left:1088px;top:775px" width="20" height="20" viewBox="0 0 20 20"><defs><radialGradient id="lg23" cx="40%" cy="35%" r="70%"><stop offset="0" stop-color="#fff"/><stop offset=".6" stop-color="#e6e6e6"/><stop offset="1" stop-color="#bdbdbd"/></radialGradient></defs><path d="M8.6 11.6 L2.2 18.2" stroke="#6a6a6a" stroke-width="2.4" stroke-linecap="round"/><path d="M9.2 11.2 L3 17.6" stroke="#9a9a9a" stroke-width="1"/><circle cx="12.6" cy="7" r="5.6" fill="url(#lg23)" stroke="#8c8c8c" stroke-width="1.5"/><circle cx="12.6" cy="7" r="3.2" fill="none" stroke="#c9c9c9" stroke-width="1"/></svg>
<div style="left:1132px;top:775px;width:36px;height:20px;background:#d2e4f8;border:1px solid #5a86c0;border-right-color:#39649e;border-bottom-color:#39649e;box-sizing:border-box;"></div>
<span class="t" style="left:1139px;top:779.00px;font-size:12px;line-height:14px;font-weight:bold;letter-spacing:-1.323px;">Add</span>
<span class="t" style="left:1240.4px;top:779.00px;font-size:12px;line-height:14px;color:#1a1a8c;text-decoration:underline;text-decoration-skip-ink:none;letter-spacing:0.297px;">[P]</span>
<div style="left:127px;top:223px;width:1px;height:3px;background:#8a8a8a;"></div>
<div style="left:188px;top:223px;width:1px;height:3px;background:#8a8a8a;"></div>
<div style="left:242px;top:223px;width:1px;height:3px;background:#8a8a8a;"></div>
<div style="left:501px;top:223px;width:1px;height:3px;background:#8a8a8a;"></div>
<div style="left:653px;top:223px;width:1px;height:3px;background:#8a8a8a;"></div>
<div style="left:713px;top:223px;width:1px;height:3px;background:#8a8a8a;"></div>
<div style="left:787px;top:223px;width:1px;height:3px;background:#8a8a8a;"></div>
<div style="left:861px;top:223px;width:1px;height:3px;background:#8a8a8a;"></div>
<div style="left:935px;top:223px;width:1px;height:3px;background:#8a8a8a;"></div>
<div style="left:1015px;top:223px;width:1px;height:3px;background:#8a8a8a;"></div>
<div style="left:1325px;top:223px;width:1px;height:3px;background:#8a8a8a;"></div>
<div style="left:1433px;top:223px;width:1px;height:3px;background:#8a8a8a;"></div>
<div style="left:390px;top:223px;width:1px;height:3px;background:#8a8a8a;"></div>
<div style="left:21px;top:223px;width:13px;height:1px;background:#2c4a60;"></div>
<div style="left:1089px;top:223px;width:35px;height:5px;background:#ccccff;border:1px solid #4062c4;border-top:none;box-sizing:border-box;"></div>
<div style="left:14px;top:531px;width:1116px;height:1px;background:#e9e9e9;"></div>
<div style="left:1237px;top:531px;width:160px;height:1px;background:#e9e9e9;"></div>
<div style="left:1431px;top:531px;width:139px;height:1px;background:#e9e9e9;"></div>
<div style="left:127px;top:536px;width:51px;height:12px;background:#fff;border:1px solid #f0f0f0;border-top-color:#6f6f6f;border-left-color:#6f6f6f;box-sizing:border-box;overflow:hidden;border-bottom:none;"></div>
<div style="left:188px;top:536px;width:44px;height:12px;background:#fff;border:1px solid #f0f0f0;border-top-color:#6f6f6f;border-left-color:#6f6f6f;box-sizing:border-box;overflow:hidden;border-bottom:none;"></div>
<div style="left:242px;top:536px;width:104px;height:12px;background:#fff;border:1px solid #f0f0f0;border-top-color:#6f6f6f;border-left-color:#6f6f6f;box-sizing:border-box;overflow:hidden;border-bottom:none;"></div>
<div style="left:501px;top:536px;width:135px;height:12px;background:#fff;border:1px solid #f0f0f0;border-top-color:#6f6f6f;border-left-color:#6f6f6f;box-sizing:border-box;overflow:hidden;border-bottom:none;"></div>
<div style="left:653px;top:536px;width:51px;height:12px;background:#fff;border:1px solid #f0f0f0;border-top-color:#6f6f6f;border-left-color:#6f6f6f;box-sizing:border-box;overflow:hidden;border-bottom:none;"></div>
<div style="left:713px;top:536px;width:64px;height:12px;background:#fff;border:1px solid #f0f0f0;border-top-color:#6f6f6f;border-left-color:#6f6f6f;box-sizing:border-box;overflow:hidden;border-bottom:none;"></div>
<div style="left:787px;top:536px;width:62px;height:12px;background:#fff;border:1px solid #f0f0f0;border-top-color:#6f6f6f;border-left-color:#6f6f6f;box-sizing:border-box;overflow:hidden;border-bottom:none;"></div>
<div style="left:861px;top:536px;width:62px;height:12px;background:#fff;border:1px solid #f0f0f0;border-top-color:#6f6f6f;border-left-color:#6f6f6f;box-sizing:border-box;overflow:hidden;border-bottom:none;"></div>
<div style="left:935px;top:536px;width:68px;height:12px;background:#fff;border:1px solid #f0f0f0;border-top-color:#6f6f6f;border-left-color:#6f6f6f;box-sizing:border-box;overflow:hidden;border-bottom:none;"></div>
<div style="left:1015px;top:536px;width:63px;height:12px;background:#fff;border:1px solid #f0f0f0;border-top-color:#6f6f6f;border-left-color:#6f6f6f;box-sizing:border-box;overflow:hidden;border-bottom:none;"></div>
<div style="left:1325px;top:536px;width:62px;height:12px;background:#fff;border:1px solid #f0f0f0;border-top-color:#6f6f6f;border-left-color:#6f6f6f;box-sizing:border-box;overflow:hidden;border-bottom:none;"></div>
<div style="left:1433px;top:536px;width:135px;height:12px;background:#fff;border:1px solid #f0f0f0;border-top-color:#6f6f6f;border-left-color:#6f6f6f;box-sizing:border-box;overflow:hidden;border-bottom:none;"></div>
<div style="left:390px;top:537px;width:74px;height:12px;background:#fff;border:1px solid #f0f0f0;border-top-color:#6f6f6f;border-left-color:#6f6f6f;box-sizing:border-box;overflow:hidden;border-bottom:none;"></div>
<div style="left:21px;top:539px;width:13px;height:7px;background:linear-gradient(135deg,#dcdcd7,#f3f3ef 55%,#ffffff);border:1px solid #2c4a60;box-sizing:border-box;"></div>
<div style="left:1089px;top:535px;width:35px;height:15px;background:#ccccff;border:1px solid #4062c4;border-right-color:#2c4cac;border-bottom-color:#2c4cac;box-sizing:border-box;"></div>
<div style="left:460px;top:532px;width:40px;height:8px;overflow:hidden;">
<svg style="position:absolute;left:8px;top:1px" width="20" height="20" viewBox="0 0 20 20"><defs><radialGradient id="lg24" cx="40%" cy="35%" r="70%"><stop offset="0" stop-color="#fff"/><stop offset=".6" stop-color="#e6e6e6"/><stop offset="1" stop-color="#bdbdbd"/></radialGradient></defs><path d="M8.6 11.6 L2.2 18.2" stroke="#6a6a6a" stroke-width="2.4" stroke-linecap="round"/><path d="M9.2 11.2 L3 17.6" stroke="#9a9a9a" stroke-width="1"/><circle cx="12.6" cy="7" r="5.6" fill="url(#lg24)" stroke="#8c8c8c" stroke-width="1.5"/><circle cx="12.6" cy="7" r="3.2" fill="none" stroke="#c9c9c9" stroke-width="1"/></svg>
</div>
<div style="left:0;top:540px;width:1575px;height:13px;overflow:hidden;">
<span class="t" style="left:64.5px;top:-7.00px;font-size:12px;line-height:14px;letter-spacing:0.088px;">0039</span>
<span class="t" style="left:130.4px;top:-7.00px;font-size:12px;line-height:14px;letter-spacing:-0.255px;">1.00</span>
<span class="t" style="left:190.6px;top:-7.00px;font-size:12px;line-height:14px;letter-spacing:0.115px;">Each</span>
<span class="t" style="left:244.4px;top:-7.00px;font-size:12px;line-height:14px;letter-spacing:0.337px;">5508-39</span>
<span class="t" style="left:393px;top:-5.00px;font-size:12px;line-height:14px;letter-spacing:-0.297px;">FL</span>
<span class="t" style="left:503.4px;top:-7.00px;font-size:12px;line-height:14px;width:131.5px;overflow:hidden;letter-spacing:0.379px;">FLSA182-F3043/4In3</span>
<span class="t" style="left:655.2px;top:-7.00px;font-size:12px;line-height:14px;width:47.6px;overflow:hidden;letter-spacing:0.1px;">SA182-F</span>
<span class="t" style="left:789.9px;top:-7.00px;font-size:12px;line-height:14px;letter-spacing:-0.133px;">3.0000</span>
<span class="t" style="left:864.2px;top:-7.00px;font-size:12px;line-height:14px;letter-spacing:-0.133px;">1.0000</span>
<span class="t" style="left:1240.6px;top:-7.00px;font-size:12px;line-height:14px;letter-spacing:-0.012px;">0046</span>
<span class="t" style="left:1094.8px;top:-7.00px;font-size:12px;line-height:14px;font-weight:bold;letter-spacing:-0.956px;">Add</span>
<svg style="position:absolute;left:468px;top:-13px" width="20" height="20" viewBox="0 0 20 20"><path d="M8.6 11.6 L2.2 18.2" stroke="#6a6a6a" stroke-width="2.4" stroke-linecap="round"/></svg>
</div>
<div style="left:16px;top:823px;width:44px;height:20px;background:#d2e4f8;border:1px solid #5a86c0;border-right-color:#39649e;border-bottom-color:#39649e;box-sizing:border-box;"></div>
<span class="t" style="left:22.3px;top:827.00px;font-size:12px;line-height:14px;font-weight:bold;letter-spacing:-0.226px;">Save</span>
<div style="left:78px;top:823px;width:30px;height:20px;background:#fff;border:1px solid #a5acb2;box-sizing:border-box;"></div>
<span class="t" style="left:81.5px;top:827.00px;font-size:12px;line-height:14px;">5</span>
<div style="left:108px;top:823px;width:111px;height:20px;background:#8eeeb0;border:1px solid #4fae74;border-right-color:#3a9460;border-bottom-color:#3a9460;box-sizing:border-box;"></div>
<span class="t" style="left:113.5px;top:827.00px;font-size:12px;line-height:14px;font-weight:bold;letter-spacing:-0.347px;">Add More Lines</span>
<div style="left:267px;top:823px;width:157px;height:20px;background:#c6c8ff;border:1px solid #5a78cc;border-right-color:#3e5cb2;border-bottom-color:#3e5cb2;box-sizing:border-box;"></div>
<span class="t" style="left:273.5px;top:827.00px;font-size:12px;line-height:14px;font-weight:bold;letter-spacing:-0.095px;">Save as New Revision</span>
<div style="left:477px;top:822px;width:105px;height:22px;background:linear-gradient(#fafbfd,#eef1f5 45%,#dde1e8);border:1px solid #565656;border-radius:3px;box-sizing:border-box;box-shadow:inset 0 0 0 1px #fff;"></div>
<svg style="position:absolute;left:483px;top:824px" width="18" height="18" viewBox="0 0 18 18"><path d="M2.5 1.5 H9.5 L13 5 V14.5 H2.5Z" fill="#fafafa" stroke="#8a8a8a"/><path d="M9.5 1.5 V5 H13" fill="#ddd" stroke="#8a8a8a"/><circle cx="11.5" cy="12" r="4.6" fill="#2f6fd6" stroke="#1b3f8f"/><path d="M9 10 q2 -2 4 0 q1 2 -1 3 q-2 1 -3 -1z" fill="#7fd0ff" opacity=".8"/></svg>
<span class="t" style="left:503.3px;top:827.00px;font-size:12px;line-height:14px;font-family:'Liberation Sans',sans-serif;font-weight:bold;color:#40454f;text-shadow:0 1px 0 #fff;-webkit-text-stroke:0.35px #40454f;letter-spacing:-0.097px;">IMPORT CSV</span>
<span class="t" style="left:647.5px;top:827.00px;font-size:12px;line-height:14px;font-weight:bold;letter-spacing:-0.305px;">Material Cost</span>
<span class="t" style="left:750px;top:827.00px;font-size:12px;line-height:14px;letter-spacing:0.248px;">87.00</span>
<span class="t" style="left:821.4px;top:827.00px;font-size:12px;line-height:14px;font-weight:bold;letter-spacing:-0.234px;">Material Sell</span>
<span class="t" style="left:923.7px;top:827.00px;font-size:12px;line-height:14px;letter-spacing:0.133px;">224.25</span>
<span class="t" style="left:1010.3px;top:827.00px;font-size:12px;line-height:14px;font-weight:bold;letter-spacing:-0.047px;">Material Profit%</span>
<div style="left:1130px;top:825px;width:13px;height:13px;background:linear-gradient(135deg,#dcdcd7,#f3f3ef 55%,#ffffff);border:1px solid #2c4a60;box-sizing:border-box;"></div>
<div style="left:1147px;top:824px;width:65px;height:20px;background:#fff;border:1px solid #a5acb2;box-sizing:border-box;"></div>
<span class="t" style="left:1150.7px;top:828.00px;font-size:12px;line-height:14px;letter-spacing:0.167px;">157.76</span>
<span class="t" style="left:1267.4px;top:827.00px;font-size:12px;line-height:14px;font-weight:bold;letter-spacing:-0.105px;">Profit Total</span>
<span class="t" style="left:1361.5px;top:827.00px;font-size:12px;line-height:14px;letter-spacing:0.000px;">137.25</span>
<span class="t" style="left:1425.1px;top:827.00px;font-size:12px;line-height:14px;font-weight:bold;letter-spacing:-0.482px;">Markup:</span>
<span class="t" style="left:1503.2px;top:827.00px;font-size:12px;line-height:14px;letter-spacing:0.258px;">157.77%</span>
<div style="left:16px;top:851px;width:97px;height:20px;background:#d2e4f8;border:1px solid #5a86c0;border-right-color:#39649e;border-bottom-color:#39649e;box-sizing:border-box;"></div>
<span class="t" style="left:22.3px;top:855.00px;font-size:12px;line-height:14px;font-weight:bold;letter-spacing:-0.175px;">Create Items</span>
<div style="left:118px;top:851px;width:89px;height:20px;background:#d2e4f8;border:1px solid #5a86c0;border-right-color:#39649e;border-bottom-color:#39649e;box-sizing:border-box;"></div>
<span class="t" style="left:123.7px;top:855.00px;font-size:12px;line-height:14px;font-weight:bold;letter-spacing:-0.261px;">Create BOM</span>
<div style="left:211px;top:851px;width:90px;height:20px;background:#d2e4f8;border:1px solid #5a86c0;border-right-color:#39649e;border-bottom-color:#39649e;box-sizing:border-box;"></div>
<span class="t" style="left:217.7px;top:855.00px;font-size:12px;line-height:14px;font-weight:bold;letter-spacing:-0.086px;">Create BOO</span>
<div style="left:306px;top:851px;width:124px;height:20px;background:#d2e4f8;border:1px solid #5a86c0;border-right-color:#39649e;border-bottom-color:#39649e;box-sizing:border-box;"></div>
<span class="t" style="left:311.6px;top:855.00px;font-size:12px;line-height:14px;font-weight:bold;letter-spacing:-0.102px;">Create Teardown</span>
<div style="left:435px;top:851px;width:81px;height:20px;background:#d2e4f8;border:1px solid #5a86c0;border-right-color:#39649e;border-bottom-color:#39649e;box-sizing:border-box;"></div>
<span class="t" style="left:440.6px;top:855.00px;font-size:12px;line-height:14px;font-weight:bold;letter-spacing:-0.071px;">Create Job</span>
<div style="left:521px;top:851px;width:137px;height:20px;background:#d2e4f8;border:1px solid #5a86c0;border-right-color:#39649e;border-bottom-color:#39649e;box-sizing:border-box;"></div>
<span class="t" style="left:526.7px;top:855.00px;font-size:12px;line-height:14px;font-weight:bold;letter-spacing:-0.042px;">Create Work Order</span>
<span class="t" style="left:663.3px;top:855.00px;font-size:12px;line-height:14px;font-weight:bold;letter-spacing:-0.211px;">Labor Cost</span>
<span class="t" style="left:739.5px;top:855.00px;font-size:12px;line-height:14px;letter-spacing:0.091px;">11,021.30</span>
<span class="t" style="left:811.6px;top:855.00px;font-size:12px;line-height:14px;font-weight:bold;letter-spacing:-0.229px;">Labor Sell</span>
<div style="left:883px;top:851px;width:65px;height:20px;background:#fff;border:1px solid #a5acb2;box-sizing:border-box;"></div>
<span class="t" style="left:887.1px;top:855.00px;font-size:12px;line-height:14px;letter-spacing:0.125px;">3125.61</span>
<span class="t" style="left:952.9px;top:855.00px;font-size:12px;line-height:14px;font-weight:bold;letter-spacing:-0.023px;">Labor Profit%</span>
<div style="left:1051px;top:851px;width:65px;height:20px;background:#fff;border:1px solid #a5acb2;box-sizing:border-box;"></div>
<span class="t" style="left:1055.4px;top:855.00px;font-size:12px;line-height:14px;letter-spacing:0.228px;">28.36</span>
<div style="left:6px;top:849px;width:112px;height:44px;border:2px solid #f01010;box-sizing:border-box;"></div>
<span class="t" style="left:13.2px;top:897.00px;font-size:12px;line-height:14px;letter-spacing:0.374px;">Last Updated: Your, Administrator 11/05/2009 18:00:28</span>
<span class="t" style="left:13.2px;top:911.00px;font-size:12px;line-height:14px;letter-spacing:0.362px;">Created By:</span>
<span class="t" style="left:99.8px;top:911.00px;font-size:12px;line-height:14px;letter-spacing:0.355px;">Your, Administrator 11/03/2009 15:59:40</span>
</div>
</body></html>
